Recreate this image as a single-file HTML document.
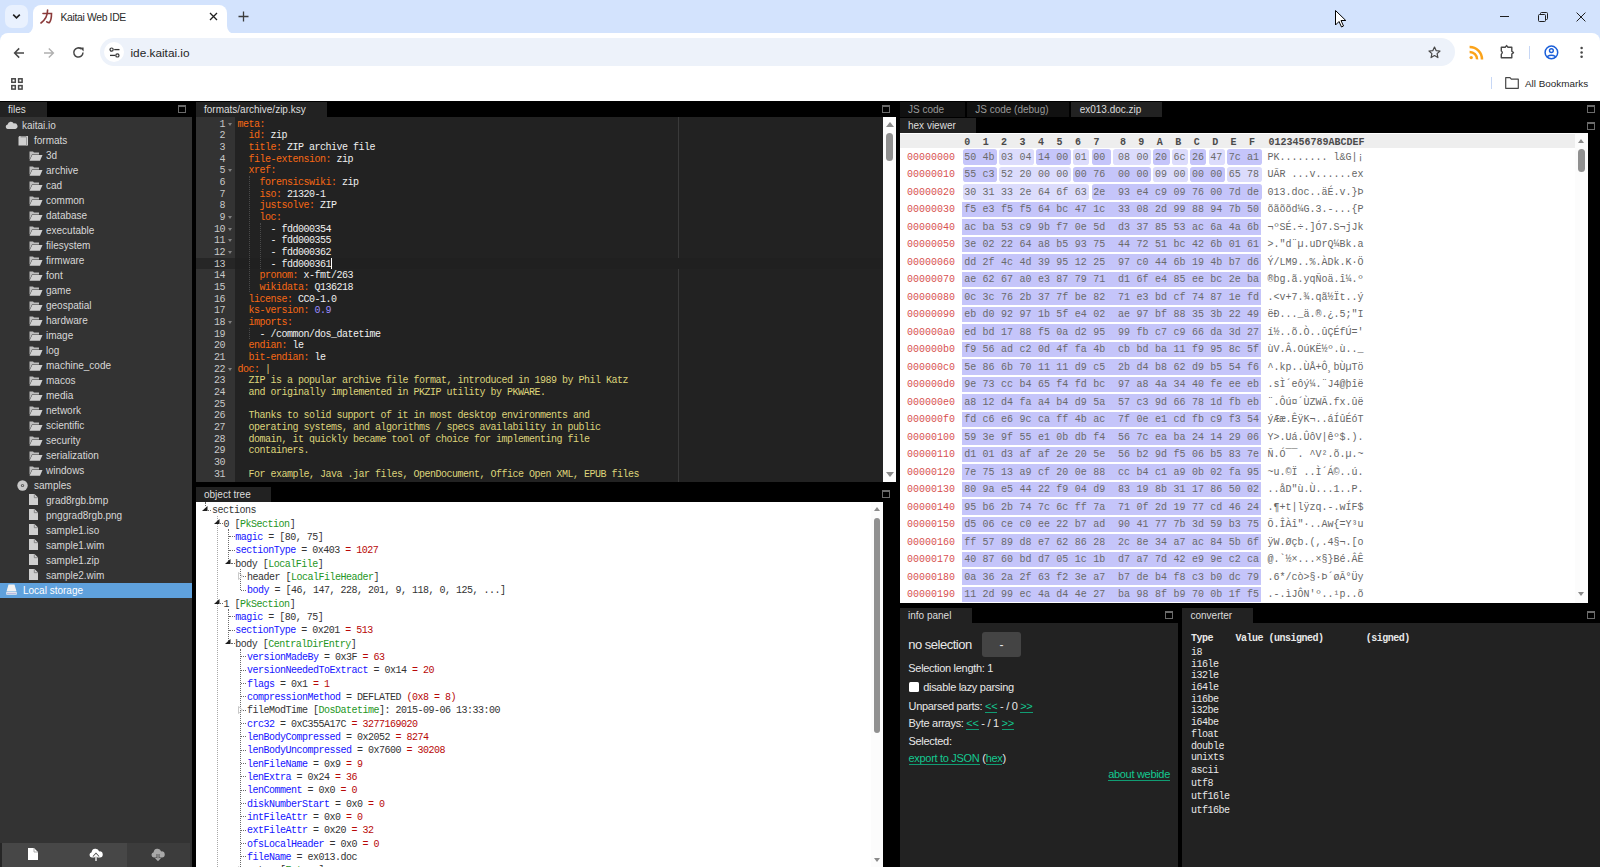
<!DOCTYPE html>
<html><head><meta charset="utf-8"><title>Kaitai Web IDE</title><style>
*{box-sizing:border-box}
html,body{margin:0;padding:0}
body{width:1600px;height:867px;overflow:hidden;position:relative;background:#000;font-family:"Liberation Sans",sans-serif}
.a{position:absolute}
.mono{font-family:"Liberation Mono",monospace}
.tab{position:absolute;height:15px;font-size:10px;line-height:14px;padding-top:0.8px;color:#999;background:#111;padding-left:8px;white-space:nowrap}
.tab.act{background:#222;color:#ddd}
.maxi{position:absolute;width:8px;height:8px;border:1px solid #6a6a6a;border-top-width:2px}
</style></head><body>
<div class="a" style="left:0;top:0;width:1600px;height:45px;background:#d3e3fd"></div>
<div class="a" style="left:0;top:33px;width:1600px;height:68px;background:#fff;border-radius:8px 8px 0 0"></div>
<div class="a" style="left:5px;top:5px;width:23px;height:23px;border-radius:7px;background:#e9f1fe"></div>
<svg class="a" style="left:12px;top:13px" width="9" height="7" viewBox="0 0 9 7"><path d="M1.2 1.6 L4.5 4.8 L7.8 1.6" fill="none" stroke="#1f1f1f" stroke-width="1.6"/></svg>
<div class="a" style="left:33px;top:5px;width:194px;height:30px;background:#fff;border-radius:8px 8px 0 0"></div>
<svg class="a" style="left:25px;top:26px" width="8" height="8" viewBox="0 0 8 8"><path d="M0 8 A8 8 0 0 0 8 0 L8 8Z" fill="#fff"/></svg>
<svg class="a" style="left:227px;top:26px" width="8" height="8" viewBox="0 0 8 8"><path d="M0 0 A8 8 0 0 0 8 8 L0 8Z" fill="#fff"/></svg>
<svg class="a" style="left:40px;top:9px" width="14" height="15" viewBox="0 0 14 15"><path d="M3 4.5 H11.5 Q11.5 11 9.5 13.5 Q8.5 14 6.8 12.8 M7.6 1 Q7.6 9 1 14" fill="none" stroke="#8b3a3a" stroke-width="1.6" stroke-linecap="round"/></svg>
<div class="a" style="left:60.5px;top:11.5px;font-size:10.4px;line-height:12px;color:#2a2a2a;letter-spacing:-0.35px;white-space:nowrap">Kaitai Web IDE</div>
<svg class="a" style="left:209px;top:12px" width="9" height="9" viewBox="0 0 9 9"><path d="M1 1L8 8M8 1L1 8" stroke="#1f1f1f" stroke-width="1.3"/></svg>
<svg class="a" style="left:238px;top:11px" width="11" height="11" viewBox="0 0 11 11"><path d="M5.5 0.5V10.5M0.5 5.5H10.5" stroke="#3c3c3c" stroke-width="1.3"/></svg>
<svg class="a" style="left:1500px;top:16px" width="9" height="2"><path d="M0 0.5H9" stroke="#1f1f1f" stroke-width="1"/></svg>
<svg class="a" style="left:1538px;top:12px" width="10" height="10" viewBox="0 0 10 10"><rect x="0.5" y="2.5" width="7" height="7" rx="1" fill="none" stroke="#1f1f1f"/><path d="M2.5 2.5V1.5Q2.5 0.5 3.5 0.5H8.5Q9.5 0.5 9.5 1.5V6.5Q9.5 7.5 8.5 7.5H7.5" fill="none" stroke="#1f1f1f"/></svg>
<svg class="a" style="left:1576px;top:12px" width="10" height="10" viewBox="0 0 10 10"><path d="M0.6 0.6L9.4 9.4M9.4 0.6L0.6 9.4" stroke="#1f1f1f" stroke-width="1"/></svg>
<svg class="a" style="left:1335px;top:10px" width="12" height="18" viewBox="0 0 12 18"><path d="M0.5 0.5 L0.5 15 L4 11.5 L6.5 17 L8.5 16 L6 10.5 L10.8 10.5 Z" fill="#fff" stroke="#000" stroke-width="1"/></svg>
<svg class="a" style="left:12.5px;top:46.5px" width="12" height="12" viewBox="0 0 12 12"><path d="M11 6H1.8M6.2 1.4L1.6 6L6.2 10.6" fill="none" stroke="#474747" stroke-width="1.5"/></svg>
<svg class="a" style="left:42.5px;top:46.5px" width="12" height="12" viewBox="0 0 12 12"><path d="M1 6H10.2M5.8 1.4L10.4 6L5.8 10.6" fill="none" stroke="#b0b0b0" stroke-width="1.4"/></svg>
<svg class="a" style="left:72px;top:46px" width="13" height="13" viewBox="0 0 13 13"><path d="M11 6.6 A4.6 4.6 0 1 1 9.4 3" fill="none" stroke="#474747" stroke-width="1.5"/><path d="M7.6 1.6 H11.6 V5.6 Z" fill="#474747"/></svg>
<div class="a" style="left:100px;top:38px;width:1355px;height:28px;border-radius:14px;background:#edf2fa"></div>
<div class="a" style="left:104px;top:42px;width:20px;height:20px;border-radius:10px;background:#fff"></div>
<svg class="a" style="left:108.5px;top:47px" width="12" height="12" viewBox="0 0 12 12"><circle cx="2.6" cy="2.6" r="1.6" fill="none" stroke="#333" stroke-width="1.2"/><path d="M5.2 2.6H10.5" stroke="#333" stroke-width="1.3"/><circle cx="8.4" cy="8.4" r="1.6" fill="none" stroke="#333" stroke-width="1.2"/><path d="M1 8.4H6.2" stroke="#333" stroke-width="1.3"/></svg>
<div class="a" style="left:130.5px;top:45.8px;font-size:11.8px;line-height:14px;color:#1f1f1f;white-space:nowrap">ide.kaitai.io</div>
<svg class="a" style="left:1428px;top:46px" width="13" height="13" viewBox="0 0 13 13"><path d="M6.5 1 L8.1 4.6 L12 5 L9.1 7.6 L9.9 11.6 L6.5 9.6 L3.1 11.6 L3.9 7.6 L1 5 L4.9 4.6 Z" fill="none" stroke="#474747" stroke-width="1.2" stroke-linejoin="round"/></svg>
<svg class="a" style="left:1469px;top:45px" width="15" height="15" viewBox="0 0 15 15"><circle cx="2.2" cy="12.6" r="1.7" fill="#fba31a"/><path d="M0.6 6.9 A7.3 7.3 0 0 1 8.1 14.4" fill="none" stroke="#fba31a" stroke-width="2.5"/><path d="M0.6 2 A12.3 12.3 0 0 1 13 14.4" fill="none" stroke="#fba31a" stroke-width="2.5"/></svg>
<svg class="a" style="left:1500px;top:44px" width="16" height="16" viewBox="0 0 16 16"><path d="M1.3 3.3 H5.2 L6.6 1.6 L8 3.3 H11.8 V7.2 L13.5 8.6 L11.8 10 V13.8 H1.3 V10.2 Q3.3 8.6 1.3 7 Z" fill="none" stroke="#474747" stroke-width="1.4" stroke-linejoin="round"/></svg>
<div class="a" style="left:1529px;top:46px;width:1px;height:13px;background:#c7d7f5"></div>
<svg class="a" style="left:1544px;top:45px" width="15" height="15" viewBox="0 0 15 15"><circle cx="7.4" cy="7.4" r="6.3" fill="none" stroke="#1b5fd9" stroke-width="1.5"/><circle cx="7.4" cy="5.6" r="1.9" fill="none" stroke="#1b5fd9" stroke-width="1.4"/><path d="M3.2 11.6 Q7.4 8.9 11.6 11.6" fill="none" stroke="#1b5fd9" stroke-width="1.5"/></svg>
<svg class="a" style="left:1580px;top:46px" width="4" height="13" viewBox="0 0 4 13"><circle cx="1.6" cy="2" r="1.25" fill="#474747"/><circle cx="1.6" cy="6.4" r="1.25" fill="#474747"/><circle cx="1.6" cy="10.8" r="1.25" fill="#474747"/></svg>
<svg class="a" style="left:11px;top:77.5px" width="12" height="12" viewBox="0 0 12 12"><rect x="0.8" y="0.8" width="3.5" height="3.5" fill="none" stroke="#474747" stroke-width="1.5"/><rect x="7.6" y="0.8" width="3.5" height="3.5" fill="none" stroke="#474747" stroke-width="1.5"/><rect x="0.8" y="7.6" width="3.5" height="3.5" fill="none" stroke="#474747" stroke-width="1.5"/><rect x="7.6" y="7.6" width="3.5" height="3.5" fill="none" stroke="#474747" stroke-width="1.5"/></svg>
<div class="a" style="left:1491px;top:77px;width:1px;height:12px;background:#c7d7f5"></div>
<svg class="a" style="left:1505px;top:77px" width="14" height="12" viewBox="0 0 14 12"><path d="M0.7 0.7 H5 L6.3 2.2 H13.3 V11.3 H0.7 Z" fill="none" stroke="#474747" stroke-width="1.2" stroke-linejoin="round"/></svg>
<div class="a" style="left:1525px;top:78px;font-size:9.9px;line-height:12px;color:#1f1f1f;white-space:nowrap">All Bookmarks</div>
<div class="tab act" style="left:0;top:102px;width:47px;padding-left:8px">files</div>
<div class="maxi" style="left:178px;top:105px"></div>
<div class="a" style="left:0;top:117px;width:192px;height:750px;background:#333"></div>
<svg class="a" style="left:5px;top:121px" width="13" height="8" viewBox="0 0 13 8"><path d="M2.5 8 A2.3 2.3 0 0 1 2.6 3.5 A3.3 3.3 0 0 1 8.8 2.5 A2.8 2.8 0 0 1 10.5 8 Z" fill="#cfcfcf"/></svg>
<div class="a" style="left:22px;top:118px;font-size:10px;line-height:15px;color:#d8d8d8;white-space:nowrap">kaitai.io</div>
<svg class="a" style="left:18px;top:135px" width="11" height="11" viewBox="0 0 11 11"><path d="M1.5 1 H10 V10.5 H0.5 V2 Z" fill="#cfcfcf"/><path d="M8.5 1.5 V10.5" stroke="#9a9a9a" stroke-width="1"/><path d="M2.5 1.8 H8" stroke="#666" stroke-width="0.9"/></svg>
<div class="a" style="left:34px;top:133px;font-size:10px;line-height:15px;color:#d8d8d8;white-space:nowrap">formats</div>
<svg class="a" style="left:29px;top:151px" width="14" height="10" viewBox="0 0 14 10"><path d="M0.5 0.5 H4 L5 1.5 H10 V3.5 H3 L0.5 9 Z" fill="#bdbdbd"/><path d="M3.2 4 H13.5 L11 9.8 H0.5 Z" fill="#d0d0d0"/></svg>
<div class="a" style="left:46px;top:148px;font-size:10px;line-height:15px;color:#d8d8d8;white-space:nowrap">3d</div>
<svg class="a" style="left:29px;top:166px" width="14" height="10" viewBox="0 0 14 10"><path d="M0.5 0.5 H4 L5 1.5 H10 V3.5 H3 L0.5 9 Z" fill="#bdbdbd"/><path d="M3.2 4 H13.5 L11 9.8 H0.5 Z" fill="#d0d0d0"/></svg>
<div class="a" style="left:46px;top:163px;font-size:10px;line-height:15px;color:#d8d8d8;white-space:nowrap">archive</div>
<svg class="a" style="left:29px;top:181px" width="14" height="10" viewBox="0 0 14 10"><path d="M0.5 0.5 H4 L5 1.5 H10 V3.5 H3 L0.5 9 Z" fill="#bdbdbd"/><path d="M3.2 4 H13.5 L11 9.8 H0.5 Z" fill="#d0d0d0"/></svg>
<div class="a" style="left:46px;top:178px;font-size:10px;line-height:15px;color:#d8d8d8;white-space:nowrap">cad</div>
<svg class="a" style="left:29px;top:196px" width="14" height="10" viewBox="0 0 14 10"><path d="M0.5 0.5 H4 L5 1.5 H10 V3.5 H3 L0.5 9 Z" fill="#bdbdbd"/><path d="M3.2 4 H13.5 L11 9.8 H0.5 Z" fill="#d0d0d0"/></svg>
<div class="a" style="left:46px;top:193px;font-size:10px;line-height:15px;color:#d8d8d8;white-space:nowrap">common</div>
<svg class="a" style="left:29px;top:211px" width="14" height="10" viewBox="0 0 14 10"><path d="M0.5 0.5 H4 L5 1.5 H10 V3.5 H3 L0.5 9 Z" fill="#bdbdbd"/><path d="M3.2 4 H13.5 L11 9.8 H0.5 Z" fill="#d0d0d0"/></svg>
<div class="a" style="left:46px;top:208px;font-size:10px;line-height:15px;color:#d8d8d8;white-space:nowrap">database</div>
<svg class="a" style="left:29px;top:226px" width="14" height="10" viewBox="0 0 14 10"><path d="M0.5 0.5 H4 L5 1.5 H10 V3.5 H3 L0.5 9 Z" fill="#bdbdbd"/><path d="M3.2 4 H13.5 L11 9.8 H0.5 Z" fill="#d0d0d0"/></svg>
<div class="a" style="left:46px;top:223px;font-size:10px;line-height:15px;color:#d8d8d8;white-space:nowrap">executable</div>
<svg class="a" style="left:29px;top:241px" width="14" height="10" viewBox="0 0 14 10"><path d="M0.5 0.5 H4 L5 1.5 H10 V3.5 H3 L0.5 9 Z" fill="#bdbdbd"/><path d="M3.2 4 H13.5 L11 9.8 H0.5 Z" fill="#d0d0d0"/></svg>
<div class="a" style="left:46px;top:238px;font-size:10px;line-height:15px;color:#d8d8d8;white-space:nowrap">filesystem</div>
<svg class="a" style="left:29px;top:256px" width="14" height="10" viewBox="0 0 14 10"><path d="M0.5 0.5 H4 L5 1.5 H10 V3.5 H3 L0.5 9 Z" fill="#bdbdbd"/><path d="M3.2 4 H13.5 L11 9.8 H0.5 Z" fill="#d0d0d0"/></svg>
<div class="a" style="left:46px;top:253px;font-size:10px;line-height:15px;color:#d8d8d8;white-space:nowrap">firmware</div>
<svg class="a" style="left:29px;top:271px" width="14" height="10" viewBox="0 0 14 10"><path d="M0.5 0.5 H4 L5 1.5 H10 V3.5 H3 L0.5 9 Z" fill="#bdbdbd"/><path d="M3.2 4 H13.5 L11 9.8 H0.5 Z" fill="#d0d0d0"/></svg>
<div class="a" style="left:46px;top:268px;font-size:10px;line-height:15px;color:#d8d8d8;white-space:nowrap">font</div>
<svg class="a" style="left:29px;top:286px" width="14" height="10" viewBox="0 0 14 10"><path d="M0.5 0.5 H4 L5 1.5 H10 V3.5 H3 L0.5 9 Z" fill="#bdbdbd"/><path d="M3.2 4 H13.5 L11 9.8 H0.5 Z" fill="#d0d0d0"/></svg>
<div class="a" style="left:46px;top:283px;font-size:10px;line-height:15px;color:#d8d8d8;white-space:nowrap">game</div>
<svg class="a" style="left:29px;top:301px" width="14" height="10" viewBox="0 0 14 10"><path d="M0.5 0.5 H4 L5 1.5 H10 V3.5 H3 L0.5 9 Z" fill="#bdbdbd"/><path d="M3.2 4 H13.5 L11 9.8 H0.5 Z" fill="#d0d0d0"/></svg>
<div class="a" style="left:46px;top:298px;font-size:10px;line-height:15px;color:#d8d8d8;white-space:nowrap">geospatial</div>
<svg class="a" style="left:29px;top:316px" width="14" height="10" viewBox="0 0 14 10"><path d="M0.5 0.5 H4 L5 1.5 H10 V3.5 H3 L0.5 9 Z" fill="#bdbdbd"/><path d="M3.2 4 H13.5 L11 9.8 H0.5 Z" fill="#d0d0d0"/></svg>
<div class="a" style="left:46px;top:313px;font-size:10px;line-height:15px;color:#d8d8d8;white-space:nowrap">hardware</div>
<svg class="a" style="left:29px;top:331px" width="14" height="10" viewBox="0 0 14 10"><path d="M0.5 0.5 H4 L5 1.5 H10 V3.5 H3 L0.5 9 Z" fill="#bdbdbd"/><path d="M3.2 4 H13.5 L11 9.8 H0.5 Z" fill="#d0d0d0"/></svg>
<div class="a" style="left:46px;top:328px;font-size:10px;line-height:15px;color:#d8d8d8;white-space:nowrap">image</div>
<svg class="a" style="left:29px;top:346px" width="14" height="10" viewBox="0 0 14 10"><path d="M0.5 0.5 H4 L5 1.5 H10 V3.5 H3 L0.5 9 Z" fill="#bdbdbd"/><path d="M3.2 4 H13.5 L11 9.8 H0.5 Z" fill="#d0d0d0"/></svg>
<div class="a" style="left:46px;top:343px;font-size:10px;line-height:15px;color:#d8d8d8;white-space:nowrap">log</div>
<svg class="a" style="left:29px;top:361px" width="14" height="10" viewBox="0 0 14 10"><path d="M0.5 0.5 H4 L5 1.5 H10 V3.5 H3 L0.5 9 Z" fill="#bdbdbd"/><path d="M3.2 4 H13.5 L11 9.8 H0.5 Z" fill="#d0d0d0"/></svg>
<div class="a" style="left:46px;top:358px;font-size:10px;line-height:15px;color:#d8d8d8;white-space:nowrap">machine_code</div>
<svg class="a" style="left:29px;top:376px" width="14" height="10" viewBox="0 0 14 10"><path d="M0.5 0.5 H4 L5 1.5 H10 V3.5 H3 L0.5 9 Z" fill="#bdbdbd"/><path d="M3.2 4 H13.5 L11 9.8 H0.5 Z" fill="#d0d0d0"/></svg>
<div class="a" style="left:46px;top:373px;font-size:10px;line-height:15px;color:#d8d8d8;white-space:nowrap">macos</div>
<svg class="a" style="left:29px;top:391px" width="14" height="10" viewBox="0 0 14 10"><path d="M0.5 0.5 H4 L5 1.5 H10 V3.5 H3 L0.5 9 Z" fill="#bdbdbd"/><path d="M3.2 4 H13.5 L11 9.8 H0.5 Z" fill="#d0d0d0"/></svg>
<div class="a" style="left:46px;top:388px;font-size:10px;line-height:15px;color:#d8d8d8;white-space:nowrap">media</div>
<svg class="a" style="left:29px;top:406px" width="14" height="10" viewBox="0 0 14 10"><path d="M0.5 0.5 H4 L5 1.5 H10 V3.5 H3 L0.5 9 Z" fill="#bdbdbd"/><path d="M3.2 4 H13.5 L11 9.8 H0.5 Z" fill="#d0d0d0"/></svg>
<div class="a" style="left:46px;top:403px;font-size:10px;line-height:15px;color:#d8d8d8;white-space:nowrap">network</div>
<svg class="a" style="left:29px;top:421px" width="14" height="10" viewBox="0 0 14 10"><path d="M0.5 0.5 H4 L5 1.5 H10 V3.5 H3 L0.5 9 Z" fill="#bdbdbd"/><path d="M3.2 4 H13.5 L11 9.8 H0.5 Z" fill="#d0d0d0"/></svg>
<div class="a" style="left:46px;top:418px;font-size:10px;line-height:15px;color:#d8d8d8;white-space:nowrap">scientific</div>
<svg class="a" style="left:29px;top:436px" width="14" height="10" viewBox="0 0 14 10"><path d="M0.5 0.5 H4 L5 1.5 H10 V3.5 H3 L0.5 9 Z" fill="#bdbdbd"/><path d="M3.2 4 H13.5 L11 9.8 H0.5 Z" fill="#d0d0d0"/></svg>
<div class="a" style="left:46px;top:433px;font-size:10px;line-height:15px;color:#d8d8d8;white-space:nowrap">security</div>
<svg class="a" style="left:29px;top:451px" width="14" height="10" viewBox="0 0 14 10"><path d="M0.5 0.5 H4 L5 1.5 H10 V3.5 H3 L0.5 9 Z" fill="#bdbdbd"/><path d="M3.2 4 H13.5 L11 9.8 H0.5 Z" fill="#d0d0d0"/></svg>
<div class="a" style="left:46px;top:448px;font-size:10px;line-height:15px;color:#d8d8d8;white-space:nowrap">serialization</div>
<svg class="a" style="left:29px;top:466px" width="14" height="10" viewBox="0 0 14 10"><path d="M0.5 0.5 H4 L5 1.5 H10 V3.5 H3 L0.5 9 Z" fill="#bdbdbd"/><path d="M3.2 4 H13.5 L11 9.8 H0.5 Z" fill="#d0d0d0"/></svg>
<div class="a" style="left:46px;top:463px;font-size:10px;line-height:15px;color:#d8d8d8;white-space:nowrap">windows</div>
<svg class="a" style="left:17px;top:480px" width="11" height="11" viewBox="0 0 11 11"><circle cx="5.5" cy="5.5" r="5.2" fill="#c8c8c8"/><circle cx="5.5" cy="5.5" r="1.6" fill="#555"/><circle cx="5.5" cy="5.5" r="0.7" fill="#c8c8c8"/></svg>
<div class="a" style="left:34px;top:478px;font-size:10px;line-height:15px;color:#d8d8d8;white-space:nowrap">samples</div>
<svg class="a" style="left:29px;top:494px" width="9" height="11" viewBox="0 0 9 11"><path d="M0 0 H5.5 L9 3.5 V11 H0 Z" fill="#d0d0d0"/><path d="M5.3 0.3 V3.7 H8.7" fill="none" stroke="#777" stroke-width="0.8"/></svg>
<div class="a" style="left:46px;top:493px;font-size:10px;line-height:15px;color:#d8d8d8;white-space:nowrap">grad8rgb.bmp</div>
<svg class="a" style="left:29px;top:509px" width="9" height="11" viewBox="0 0 9 11"><path d="M0 0 H5.5 L9 3.5 V11 H0 Z" fill="#d0d0d0"/><path d="M5.3 0.3 V3.7 H8.7" fill="none" stroke="#777" stroke-width="0.8"/></svg>
<div class="a" style="left:46px;top:508px;font-size:10px;line-height:15px;color:#d8d8d8;white-space:nowrap">pnggrad8rgb.png</div>
<svg class="a" style="left:29px;top:524px" width="9" height="11" viewBox="0 0 9 11"><path d="M0 0 H5.5 L9 3.5 V11 H0 Z" fill="#d0d0d0"/><path d="M5.3 0.3 V3.7 H8.7" fill="none" stroke="#777" stroke-width="0.8"/></svg>
<div class="a" style="left:46px;top:523px;font-size:10px;line-height:15px;color:#d8d8d8;white-space:nowrap">sample1.iso</div>
<svg class="a" style="left:29px;top:539px" width="9" height="11" viewBox="0 0 9 11"><path d="M0 0 H5.5 L9 3.5 V11 H0 Z" fill="#d0d0d0"/><path d="M5.3 0.3 V3.7 H8.7" fill="none" stroke="#777" stroke-width="0.8"/></svg>
<div class="a" style="left:46px;top:538px;font-size:10px;line-height:15px;color:#d8d8d8;white-space:nowrap">sample1.wim</div>
<svg class="a" style="left:29px;top:554px" width="9" height="11" viewBox="0 0 9 11"><path d="M0 0 H5.5 L9 3.5 V11 H0 Z" fill="#d0d0d0"/><path d="M5.3 0.3 V3.7 H8.7" fill="none" stroke="#777" stroke-width="0.8"/></svg>
<div class="a" style="left:46px;top:553px;font-size:10px;line-height:15px;color:#d8d8d8;white-space:nowrap">sample1.zip</div>
<svg class="a" style="left:29px;top:569px" width="9" height="11" viewBox="0 0 9 11"><path d="M0 0 H5.5 L9 3.5 V11 H0 Z" fill="#d0d0d0"/><path d="M5.3 0.3 V3.7 H8.7" fill="none" stroke="#777" stroke-width="0.8"/></svg>
<div class="a" style="left:46px;top:568px;font-size:10px;line-height:15px;color:#d8d8d8;white-space:nowrap">sample2.wim</div>
<div class="a" style="left:0;top:583px;width:192px;height:15px;background:#5fa1dd"></div>
<svg class="a" style="left:6px;top:584px" width="11" height="11" viewBox="0 0 11 11"><path d="M2.5 0.5 H8.5 L10.5 7.5 H0.5 Z" fill="#f2f2f2"/><rect x="0.3" y="8" width="10.4" height="2.7" fill="#f2f2f2"/><path d="M1 9.3 H10" stroke="#9b9bd8" stroke-width="0.8"/></svg>
<div class="a" style="left:23px;top:583px;font-size:10px;line-height:15px;color:#fff;white-space:nowrap">Local storage</div>
<div class="a" style="left:0;top:843px;width:2px;height:24px;background:#262626"></div>
<div class="a" style="left:2px;top:843px;width:125px;height:24px;background:#474747"></div>
<div class="a" style="left:127px;top:843px;width:63px;height:24px;background:#3c3c3c"></div>
<svg class="a" style="left:28px;top:848px" width="10" height="12" viewBox="0 0 10 12"><path d="M0 0 H6 L10 4 V12 H0 Z" fill="#fff"/><path d="M6 0 V4 H10" fill="none" stroke="#999" stroke-width="0.8"/></svg>
<svg class="a" style="left:89px;top:848px" width="14" height="14" viewBox="0 0 14 14"><path d="M2.8 9.6 A2.7 2.7 0 0 1 2.6 4.3 A3.9 3.9 0 0 1 10.2 3.4 A3.1 3.1 0 0 1 11 9.6 Z" fill="#fff"/><path d="M7 13 V6.8 M4.6 9.2 L7 6.6 L9.4 9.2" fill="none" stroke="#474747" stroke-width="2.8"/><path d="M7 13 V6.8 M4.6 9.2 L7 6.6 L9.4 9.2" fill="none" stroke="#fff" stroke-width="1.3"/></svg>
<svg class="a" style="left:151px;top:848px" width="14" height="14" viewBox="0 0 14 14"><path d="M2.8 9.6 A2.7 2.7 0 0 1 2.6 4.3 A3.9 3.9 0 0 1 10.2 3.4 A3.1 3.1 0 0 1 11 9.6 Z" fill="#a9a9a9"/><path d="M7 6 V12 M4.6 9.8 L7 12.3 L9.4 9.8" fill="none" stroke="#3c3c3c" stroke-width="2.8"/><path d="M7 6 V12 M4.6 9.8 L7 12.3 L9.4 9.8" fill="none" stroke="#a9a9a9" stroke-width="1.3"/></svg>
<div class="tab act" style="left:196px;top:102px;width:130.5px;padding-left:8px">formats/archive/zip.ksy</div>
<div class="maxi" style="left:882px;top:105px"></div>
<div class="a" style="left:196px;top:117px;width:700px;height:365px;background:#222;overflow:hidden">
<div class="a" style="left:0;top:0;width:39px;height:365px;background:#333"></div>
<div class="a" style="left:0;top:140.50px;width:39px;height:11.67px;background:#262626"></div>
<div class="a" style="left:482px;top:0;width:1px;height:365px;background:#3a3a3a"></div>
<div class="a" style="left:39px;top:141.00px;width:648px;height:11.17px;background:#202020"></div>
<div class="a mono" style="left:0;top:1.50px;width:29px;text-align:right;font-size:10px;line-height:11.67px;color:#c8c8c8;letter-spacing:-0.5px">1</div>
<div class="a" style="left:31.5px;top:5.70px;width:0;height:0;border-left:2.5px solid transparent;border-right:2.5px solid transparent;border-top:3px solid #808080"></div>
<div class="a mono" style="left:41.5px;top:1.50px;font-size:10px;line-height:11.67px;white-space:pre;letter-spacing:-0.5px;color:#f0f0f0"><span style="color:#f66814">meta:</span></div>
<div class="a mono" style="left:0;top:13.17px;width:29px;text-align:right;font-size:10px;line-height:11.67px;color:#c8c8c8;letter-spacing:-0.5px">2</div>
<div class="a mono" style="left:41.5px;top:13.17px;font-size:10px;line-height:11.67px;white-space:pre;letter-spacing:-0.5px;color:#f0f0f0">  <span style="color:#f66814">id:</span> <span style="color:#f0f0f0">zip</span></div>
<div class="a mono" style="left:0;top:24.83px;width:29px;text-align:right;font-size:10px;line-height:11.67px;color:#c8c8c8;letter-spacing:-0.5px">3</div>
<div class="a mono" style="left:41.5px;top:24.83px;font-size:10px;line-height:11.67px;white-space:pre;letter-spacing:-0.5px;color:#f0f0f0">  <span style="color:#f66814">title:</span> <span style="color:#f0f0f0">ZIP archive file</span></div>
<div class="a mono" style="left:0;top:36.50px;width:29px;text-align:right;font-size:10px;line-height:11.67px;color:#c8c8c8;letter-spacing:-0.5px">4</div>
<div class="a mono" style="left:41.5px;top:36.50px;font-size:10px;line-height:11.67px;white-space:pre;letter-spacing:-0.5px;color:#f0f0f0">  <span style="color:#f66814">file-extension:</span> <span style="color:#f0f0f0">zip</span></div>
<div class="a mono" style="left:0;top:48.17px;width:29px;text-align:right;font-size:10px;line-height:11.67px;color:#c8c8c8;letter-spacing:-0.5px">5</div>
<div class="a" style="left:31.5px;top:52.37px;width:0;height:0;border-left:2.5px solid transparent;border-right:2.5px solid transparent;border-top:3px solid #808080"></div>
<div class="a mono" style="left:41.5px;top:48.17px;font-size:10px;line-height:11.67px;white-space:pre;letter-spacing:-0.5px;color:#f0f0f0">  <span style="color:#f66814">xref:</span></div>
<div class="a mono" style="left:0;top:59.83px;width:29px;text-align:right;font-size:10px;line-height:11.67px;color:#c8c8c8;letter-spacing:-0.5px">6</div>
<div class="a mono" style="left:41.5px;top:59.83px;font-size:10px;line-height:11.67px;white-space:pre;letter-spacing:-0.5px;color:#f0f0f0">    <span style="color:#f66814">forensicswiki:</span> <span style="color:#f0f0f0">zip</span></div>
<div class="a mono" style="left:0;top:71.50px;width:29px;text-align:right;font-size:10px;line-height:11.67px;color:#c8c8c8;letter-spacing:-0.5px">7</div>
<div class="a mono" style="left:41.5px;top:71.50px;font-size:10px;line-height:11.67px;white-space:pre;letter-spacing:-0.5px;color:#f0f0f0">    <span style="color:#f66814">iso:</span> <span style="color:#f0f0f0">21320-1</span></div>
<div class="a mono" style="left:0;top:83.17px;width:29px;text-align:right;font-size:10px;line-height:11.67px;color:#c8c8c8;letter-spacing:-0.5px">8</div>
<div class="a mono" style="left:41.5px;top:83.17px;font-size:10px;line-height:11.67px;white-space:pre;letter-spacing:-0.5px;color:#f0f0f0">    <span style="color:#f66814">justsolve:</span> <span style="color:#f0f0f0">ZIP</span></div>
<div class="a mono" style="left:0;top:94.83px;width:29px;text-align:right;font-size:10px;line-height:11.67px;color:#c8c8c8;letter-spacing:-0.5px">9</div>
<div class="a" style="left:31.5px;top:99.03px;width:0;height:0;border-left:2.5px solid transparent;border-right:2.5px solid transparent;border-top:3px solid #808080"></div>
<div class="a mono" style="left:41.5px;top:94.83px;font-size:10px;line-height:11.67px;white-space:pre;letter-spacing:-0.5px;color:#f0f0f0">    <span style="color:#f66814">loc:</span></div>
<div class="a mono" style="left:0;top:106.50px;width:29px;text-align:right;font-size:10px;line-height:11.67px;color:#c8c8c8;letter-spacing:-0.5px">10</div>
<div class="a" style="left:31.5px;top:110.70px;width:0;height:0;border-left:2.5px solid transparent;border-right:2.5px solid transparent;border-top:3px solid #808080"></div>
<div class="a mono" style="left:41.5px;top:106.50px;font-size:10px;line-height:11.67px;white-space:pre;letter-spacing:-0.5px;color:#f0f0f0">      <span style="color:#f0f0f0">- fdd000354</span></div>
<div class="a mono" style="left:0;top:118.17px;width:29px;text-align:right;font-size:10px;line-height:11.67px;color:#c8c8c8;letter-spacing:-0.5px">11</div>
<div class="a" style="left:31.5px;top:122.37px;width:0;height:0;border-left:2.5px solid transparent;border-right:2.5px solid transparent;border-top:3px solid #808080"></div>
<div class="a mono" style="left:41.5px;top:118.17px;font-size:10px;line-height:11.67px;white-space:pre;letter-spacing:-0.5px;color:#f0f0f0">      <span style="color:#f0f0f0">- fdd000355</span></div>
<div class="a mono" style="left:0;top:129.83px;width:29px;text-align:right;font-size:10px;line-height:11.67px;color:#c8c8c8;letter-spacing:-0.5px">12</div>
<div class="a" style="left:31.5px;top:134.03px;width:0;height:0;border-left:2.5px solid transparent;border-right:2.5px solid transparent;border-top:3px solid #808080"></div>
<div class="a mono" style="left:41.5px;top:129.83px;font-size:10px;line-height:11.67px;white-space:pre;letter-spacing:-0.5px;color:#f0f0f0">      <span style="color:#f0f0f0">- fdd000362</span></div>
<div class="a mono" style="left:0;top:141.50px;width:29px;text-align:right;font-size:10px;line-height:11.67px;color:#c8c8c8;letter-spacing:-0.5px">13</div>
<div class="a mono" style="left:41.5px;top:141.50px;font-size:10px;line-height:11.67px;white-space:pre;letter-spacing:-0.5px;color:#f0f0f0">      <span style="color:#f0f0f0">- fdd000361</span></div>
<div class="a mono" style="left:0;top:153.17px;width:29px;text-align:right;font-size:10px;line-height:11.67px;color:#c8c8c8;letter-spacing:-0.5px">14</div>
<div class="a mono" style="left:41.5px;top:153.17px;font-size:10px;line-height:11.67px;white-space:pre;letter-spacing:-0.5px;color:#f0f0f0">    <span style="color:#f66814">pronom:</span> <span style="color:#f0f0f0">x-fmt/263</span></div>
<div class="a mono" style="left:0;top:164.83px;width:29px;text-align:right;font-size:10px;line-height:11.67px;color:#c8c8c8;letter-spacing:-0.5px">15</div>
<div class="a mono" style="left:41.5px;top:164.83px;font-size:10px;line-height:11.67px;white-space:pre;letter-spacing:-0.5px;color:#f0f0f0">    <span style="color:#f66814">wikidata:</span> <span style="color:#f0f0f0">Q136218</span></div>
<div class="a mono" style="left:0;top:176.50px;width:29px;text-align:right;font-size:10px;line-height:11.67px;color:#c8c8c8;letter-spacing:-0.5px">16</div>
<div class="a mono" style="left:41.5px;top:176.50px;font-size:10px;line-height:11.67px;white-space:pre;letter-spacing:-0.5px;color:#f0f0f0">  <span style="color:#f66814">license:</span> <span style="color:#f0f0f0">CC0-1.0</span></div>
<div class="a mono" style="left:0;top:188.17px;width:29px;text-align:right;font-size:10px;line-height:11.67px;color:#c8c8c8;letter-spacing:-0.5px">17</div>
<div class="a mono" style="left:41.5px;top:188.17px;font-size:10px;line-height:11.67px;white-space:pre;letter-spacing:-0.5px;color:#f0f0f0">  <span style="color:#f66814">ks-version:</span> <span style="color:#9a8cff">0.9</span></div>
<div class="a mono" style="left:0;top:199.83px;width:29px;text-align:right;font-size:10px;line-height:11.67px;color:#c8c8c8;letter-spacing:-0.5px">18</div>
<div class="a" style="left:31.5px;top:204.03px;width:0;height:0;border-left:2.5px solid transparent;border-right:2.5px solid transparent;border-top:3px solid #808080"></div>
<div class="a mono" style="left:41.5px;top:199.83px;font-size:10px;line-height:11.67px;white-space:pre;letter-spacing:-0.5px;color:#f0f0f0">  <span style="color:#f66814">imports:</span></div>
<div class="a mono" style="left:0;top:211.50px;width:29px;text-align:right;font-size:10px;line-height:11.67px;color:#c8c8c8;letter-spacing:-0.5px">19</div>
<div class="a mono" style="left:41.5px;top:211.50px;font-size:10px;line-height:11.67px;white-space:pre;letter-spacing:-0.5px;color:#f0f0f0">    <span style="color:#f0f0f0">- /common/dos_datetime</span></div>
<div class="a mono" style="left:0;top:223.17px;width:29px;text-align:right;font-size:10px;line-height:11.67px;color:#c8c8c8;letter-spacing:-0.5px">20</div>
<div class="a mono" style="left:41.5px;top:223.17px;font-size:10px;line-height:11.67px;white-space:pre;letter-spacing:-0.5px;color:#f0f0f0">  <span style="color:#f66814">endian:</span> <span style="color:#f0f0f0">le</span></div>
<div class="a mono" style="left:0;top:234.83px;width:29px;text-align:right;font-size:10px;line-height:11.67px;color:#c8c8c8;letter-spacing:-0.5px">21</div>
<div class="a mono" style="left:41.5px;top:234.83px;font-size:10px;line-height:11.67px;white-space:pre;letter-spacing:-0.5px;color:#f0f0f0">  <span style="color:#f66814">bit-endian:</span> <span style="color:#f0f0f0">le</span></div>
<div class="a mono" style="left:0;top:246.50px;width:29px;text-align:right;font-size:10px;line-height:11.67px;color:#c8c8c8;letter-spacing:-0.5px">22</div>
<div class="a" style="left:31.5px;top:250.70px;width:0;height:0;border-left:2.5px solid transparent;border-right:2.5px solid transparent;border-top:3px solid #808080"></div>
<div class="a mono" style="left:41.5px;top:246.50px;font-size:10px;line-height:11.67px;white-space:pre;letter-spacing:-0.5px;color:#f0f0f0"><span style="color:#f66814">doc:</span> <span style="color:#ddd47a">|</span></div>
<div class="a mono" style="left:0;top:258.17px;width:29px;text-align:right;font-size:10px;line-height:11.67px;color:#c8c8c8;letter-spacing:-0.5px">23</div>
<div class="a mono" style="left:41.5px;top:258.17px;font-size:10px;line-height:11.67px;white-space:pre;letter-spacing:-0.5px;color:#f0f0f0">  <span style="color:#ddd47a">ZIP is a popular archive file format, introduced in 1989 by Phil Katz</span></div>
<div class="a mono" style="left:0;top:269.83px;width:29px;text-align:right;font-size:10px;line-height:11.67px;color:#c8c8c8;letter-spacing:-0.5px">24</div>
<div class="a mono" style="left:41.5px;top:269.83px;font-size:10px;line-height:11.67px;white-space:pre;letter-spacing:-0.5px;color:#f0f0f0">  <span style="color:#ddd47a">and originally implemented in PKZIP utility by PKWARE.</span></div>
<div class="a mono" style="left:0;top:281.50px;width:29px;text-align:right;font-size:10px;line-height:11.67px;color:#c8c8c8;letter-spacing:-0.5px">25</div>
<div class="a mono" style="left:41.5px;top:281.50px;font-size:10px;line-height:11.67px;white-space:pre;letter-spacing:-0.5px;color:#f0f0f0"></div>
<div class="a mono" style="left:0;top:293.17px;width:29px;text-align:right;font-size:10px;line-height:11.67px;color:#c8c8c8;letter-spacing:-0.5px">26</div>
<div class="a mono" style="left:41.5px;top:293.17px;font-size:10px;line-height:11.67px;white-space:pre;letter-spacing:-0.5px;color:#f0f0f0">  <span style="color:#ddd47a">Thanks to solid support of it in most desktop environments and</span></div>
<div class="a mono" style="left:0;top:304.83px;width:29px;text-align:right;font-size:10px;line-height:11.67px;color:#c8c8c8;letter-spacing:-0.5px">27</div>
<div class="a mono" style="left:41.5px;top:304.83px;font-size:10px;line-height:11.67px;white-space:pre;letter-spacing:-0.5px;color:#f0f0f0">  <span style="color:#ddd47a">operating systems, and algorithms / specs availability in public</span></div>
<div class="a mono" style="left:0;top:316.50px;width:29px;text-align:right;font-size:10px;line-height:11.67px;color:#c8c8c8;letter-spacing:-0.5px">28</div>
<div class="a mono" style="left:41.5px;top:316.50px;font-size:10px;line-height:11.67px;white-space:pre;letter-spacing:-0.5px;color:#f0f0f0">  <span style="color:#ddd47a">domain, it quickly became tool of choice for implementing file</span></div>
<div class="a mono" style="left:0;top:328.17px;width:29px;text-align:right;font-size:10px;line-height:11.67px;color:#c8c8c8;letter-spacing:-0.5px">29</div>
<div class="a mono" style="left:41.5px;top:328.17px;font-size:10px;line-height:11.67px;white-space:pre;letter-spacing:-0.5px;color:#f0f0f0">  <span style="color:#ddd47a">containers.</span></div>
<div class="a mono" style="left:0;top:339.83px;width:29px;text-align:right;font-size:10px;line-height:11.67px;color:#c8c8c8;letter-spacing:-0.5px">30</div>
<div class="a mono" style="left:41.5px;top:339.83px;font-size:10px;line-height:11.67px;white-space:pre;letter-spacing:-0.5px;color:#f0f0f0"></div>
<div class="a mono" style="left:0;top:351.50px;width:29px;text-align:right;font-size:10px;line-height:11.67px;color:#c8c8c8;letter-spacing:-0.5px">31</div>
<div class="a mono" style="left:41.5px;top:351.50px;font-size:10px;line-height:11.67px;white-space:pre;letter-spacing:-0.5px;color:#f0f0f0">  <span style="color:#ddd47a">For example, Java .jar files, OpenDocument, Office Open XML, EPUB files</span></div>
<div class="a" style="left:52.5px;top:58.83px;width:1px;height:116.67px;border-left:1px dotted #4a4a4a"></div>
<div class="a" style="left:63.5px;top:105.50px;width:1px;height:46.67px;border-left:1px dotted #4a4a4a"></div>
<div class="a" style="left:52.5px;top:210.50px;width:1px;height:11.67px;border-left:1px dotted #4a4a4a"></div>
<div class="a" style="left:135.0px;top:140.50px;width:1px;height:11.67px;background:#fff"></div>
<div class="a" style="left:687px;top:0;width:13px;height:365px;background:#fcfcfc"></div>
<div class="a" style="left:689.5px;top:5px;width:0;height:0;border-left:4px solid transparent;border-right:4px solid transparent;border-bottom:5px solid #8a8a8a"></div>
<div class="a" style="left:690px;top:15.5px;width:7px;height:28.5px;border-radius:3.5px;background:#909090"></div>
<div class="a" style="left:689.5px;top:354.5px;width:0;height:0;border-left:4px solid transparent;border-right:4px solid transparent;border-top:5px solid #8a8a8a"></div>
</div>
<div class="tab act" style="left:196px;top:487px;width:75px;padding-left:8px">object tree</div>
<div class="maxi" style="left:882px;top:490px"></div>
<div class="a" style="left:196px;top:502px;width:687px;height:365px;background:#fff;overflow:hidden">
<div class="a" style="left:9.0px;top:0.0px;width:1px;height:4.0px;border-left:1px dotted #6a6a6a"></div>
<div class="a" style="left:21.0px;top:13.8px;width:1px;height:351.2px;border-left:1px dotted #a8a8a8"></div>
<div class="a" style="left:32.0px;top:27.2px;width:1px;height:33.8px;border-left:1px dotted #6a6a6a"></div>
<div class="a" style="left:44.0px;top:67.2px;width:1px;height:20.5px;border-left:1px dotted #6a6a6a"></div>
<div class="a" style="left:32.0px;top:107.2px;width:1px;height:33.8px;border-left:1px dotted #6a6a6a"></div>
<div class="a" style="left:44.0px;top:147.2px;width:1px;height:217.8px;border-left:1px dotted #6a6a6a"></div>
<svg class="a" style="left:6.0px;top:4.1px" width="5.5" height="5" viewBox="0 0 5.5 5"><path d="M0 5 L5.5 5 L5.5 0 Z" fill="#1e1e1e"/></svg>
<div class="a" style="left:12.0px;top:7.7px;width:3.4px;height:1px;border-top:1px dotted #6a6a6a"></div>
<div class="a mono" style="left:15.9px;top:2.2px;font-size:10px;line-height:13.333px;white-space:pre;letter-spacing:-0.5px;color:#333">sections</div>
<svg class="a" style="left:18.0px;top:17.4px" width="5.5" height="5" viewBox="0 0 5.5 5"><path d="M0 5 L5.5 5 L5.5 0 Z" fill="#1e1e1e"/></svg>
<div class="a" style="left:24.0px;top:21.0px;width:3.1px;height:1px;border-top:1px dotted #6a6a6a"></div>
<div class="a mono" style="left:27.6px;top:15.5px;font-size:10px;line-height:13.333px;white-space:pre;letter-spacing:-0.5px;color:#333">0 [<span style="color:#1e961e">PkSection</span>]</div>
<div class="a" style="left:33.0px;top:34.3px;width:5.7px;height:1px;border-top:1px dotted #6a6a6a"></div>
<div class="a mono" style="left:39.2px;top:28.9px;font-size:10px;line-height:13.333px;white-space:pre;letter-spacing:-0.5px;color:#333"><span style="color:#1414ff">magic</span> = [80, 75]</div>
<div class="a" style="left:33.0px;top:47.7px;width:5.7px;height:1px;border-top:1px dotted #6a6a6a"></div>
<div class="a mono" style="left:39.2px;top:42.2px;font-size:10px;line-height:13.333px;white-space:pre;letter-spacing:-0.5px;color:#333"><span style="color:#1414ff">sectionType</span> = 0x403 <span style="color:#b80808">= 1027</span></div>
<svg class="a" style="left:29.0px;top:57.4px" width="5.5" height="5" viewBox="0 0 5.5 5"><path d="M0 5 L5.5 5 L5.5 0 Z" fill="#1e1e1e"/></svg>
<div class="a" style="left:35.0px;top:61.0px;width:3.7px;height:1px;border-top:1px dotted #6a6a6a"></div>
<div class="a mono" style="left:39.2px;top:55.5px;font-size:10px;line-height:13.333px;white-space:pre;letter-spacing:-0.5px;color:#333">body [<span style="color:#1e961e">LocalFile</span>]</div>
<svg class="a" style="left:42.0px;top:70.3px" width="5" height="8" viewBox="0 0 5 8"><path d="M0.5 0.5 L4.5 4 L0.5 7.5 Z" fill="none" stroke="#c9c9c9" stroke-width="1"/></svg>
<div class="a" style="left:47.0px;top:74.3px;width:3.4px;height:1px;border-top:1px dotted #6a6a6a"></div>
<div class="a mono" style="left:50.9px;top:68.9px;font-size:10px;line-height:13.333px;white-space:pre;letter-spacing:-0.5px;color:#333">header [<span style="color:#1e961e">LocalFileHeader</span>]</div>
<div class="a" style="left:45.0px;top:87.7px;width:5.4px;height:1px;border-top:1px dotted #6a6a6a"></div>
<div class="a mono" style="left:50.9px;top:82.2px;font-size:10px;line-height:13.333px;white-space:pre;letter-spacing:-0.5px;color:#333"><span style="color:#1414ff">body</span> = [46, 147, 228, 201, 9, 118, 0, 125, ...]</div>
<svg class="a" style="left:18.0px;top:97.4px" width="5.5" height="5" viewBox="0 0 5.5 5"><path d="M0 5 L5.5 5 L5.5 0 Z" fill="#1e1e1e"/></svg>
<div class="a" style="left:24.0px;top:101.0px;width:3.1px;height:1px;border-top:1px dotted #6a6a6a"></div>
<div class="a mono" style="left:27.6px;top:95.5px;font-size:10px;line-height:13.333px;white-space:pre;letter-spacing:-0.5px;color:#333">1 [<span style="color:#1e961e">PkSection</span>]</div>
<div class="a" style="left:33.0px;top:114.3px;width:5.7px;height:1px;border-top:1px dotted #6a6a6a"></div>
<div class="a mono" style="left:39.2px;top:108.9px;font-size:10px;line-height:13.333px;white-space:pre;letter-spacing:-0.5px;color:#333"><span style="color:#1414ff">magic</span> = [80, 75]</div>
<div class="a" style="left:33.0px;top:127.7px;width:5.7px;height:1px;border-top:1px dotted #6a6a6a"></div>
<div class="a mono" style="left:39.2px;top:122.2px;font-size:10px;line-height:13.333px;white-space:pre;letter-spacing:-0.5px;color:#333"><span style="color:#1414ff">sectionType</span> = 0x201 <span style="color:#b80808">= 513</span></div>
<svg class="a" style="left:29.0px;top:137.4px" width="5.5" height="5" viewBox="0 0 5.5 5"><path d="M0 5 L5.5 5 L5.5 0 Z" fill="#1e1e1e"/></svg>
<div class="a" style="left:35.0px;top:141.0px;width:3.7px;height:1px;border-top:1px dotted #6a6a6a"></div>
<div class="a mono" style="left:39.2px;top:135.5px;font-size:10px;line-height:13.333px;white-space:pre;letter-spacing:-0.5px;color:#333">body [<span style="color:#1e961e">CentralDirEntry</span>]</div>
<div class="a" style="left:45.0px;top:154.3px;width:5.4px;height:1px;border-top:1px dotted #6a6a6a"></div>
<div class="a mono" style="left:50.9px;top:148.9px;font-size:10px;line-height:13.333px;white-space:pre;letter-spacing:-0.5px;color:#333"><span style="color:#1414ff">versionMadeBy</span> = 0x3F <span style="color:#b80808">= 63</span></div>
<div class="a" style="left:45.0px;top:167.7px;width:5.4px;height:1px;border-top:1px dotted #6a6a6a"></div>
<div class="a mono" style="left:50.9px;top:162.2px;font-size:10px;line-height:13.333px;white-space:pre;letter-spacing:-0.5px;color:#333"><span style="color:#1414ff">versionNeededToExtract</span> = 0x14 <span style="color:#b80808">= 20</span></div>
<div class="a" style="left:45.0px;top:181.0px;width:5.4px;height:1px;border-top:1px dotted #6a6a6a"></div>
<div class="a mono" style="left:50.9px;top:175.5px;font-size:10px;line-height:13.333px;white-space:pre;letter-spacing:-0.5px;color:#333"><span style="color:#1414ff">flags</span> = 0x1 <span style="color:#b80808">= 1</span></div>
<div class="a" style="left:45.0px;top:194.3px;width:5.4px;height:1px;border-top:1px dotted #6a6a6a"></div>
<div class="a mono" style="left:50.9px;top:188.9px;font-size:10px;line-height:13.333px;white-space:pre;letter-spacing:-0.5px;color:#333"><span style="color:#1414ff">compressionMethod</span> = DEFLATED <span style="color:#b80808">(0x8 = 8)</span></div>
<svg class="a" style="left:42.0px;top:203.7px" width="5" height="8" viewBox="0 0 5 8"><path d="M0.5 0.5 L4.5 4 L0.5 7.5 Z" fill="none" stroke="#c9c9c9" stroke-width="1"/></svg>
<div class="a" style="left:47.0px;top:207.7px;width:3.4px;height:1px;border-top:1px dotted #6a6a6a"></div>
<div class="a mono" style="left:50.9px;top:202.2px;font-size:10px;line-height:13.333px;white-space:pre;letter-spacing:-0.5px;color:#333">fileModTime [<span style="color:#1e961e">DosDatetime</span>]: 2015-09-06 13:33:00</div>
<div class="a" style="left:45.0px;top:221.0px;width:5.4px;height:1px;border-top:1px dotted #6a6a6a"></div>
<div class="a mono" style="left:50.9px;top:215.5px;font-size:10px;line-height:13.333px;white-space:pre;letter-spacing:-0.5px;color:#333"><span style="color:#1414ff">crc32</span> = 0xC355A17C <span style="color:#b80808">= 3277169020</span></div>
<div class="a" style="left:45.0px;top:234.3px;width:5.4px;height:1px;border-top:1px dotted #6a6a6a"></div>
<div class="a mono" style="left:50.9px;top:228.9px;font-size:10px;line-height:13.333px;white-space:pre;letter-spacing:-0.5px;color:#333"><span style="color:#1414ff">lenBodyCompressed</span> = 0x2052 <span style="color:#b80808">= 8274</span></div>
<div class="a" style="left:45.0px;top:247.7px;width:5.4px;height:1px;border-top:1px dotted #6a6a6a"></div>
<div class="a mono" style="left:50.9px;top:242.2px;font-size:10px;line-height:13.333px;white-space:pre;letter-spacing:-0.5px;color:#333"><span style="color:#1414ff">lenBodyUncompressed</span> = 0x7600 <span style="color:#b80808">= 30208</span></div>
<div class="a" style="left:45.0px;top:261.0px;width:5.4px;height:1px;border-top:1px dotted #6a6a6a"></div>
<div class="a mono" style="left:50.9px;top:255.5px;font-size:10px;line-height:13.333px;white-space:pre;letter-spacing:-0.5px;color:#333"><span style="color:#1414ff">lenFileName</span> = 0x9 <span style="color:#b80808">= 9</span></div>
<div class="a" style="left:45.0px;top:274.3px;width:5.4px;height:1px;border-top:1px dotted #6a6a6a"></div>
<div class="a mono" style="left:50.9px;top:268.9px;font-size:10px;line-height:13.333px;white-space:pre;letter-spacing:-0.5px;color:#333"><span style="color:#1414ff">lenExtra</span> = 0x24 <span style="color:#b80808">= 36</span></div>
<div class="a" style="left:45.0px;top:287.7px;width:5.4px;height:1px;border-top:1px dotted #6a6a6a"></div>
<div class="a mono" style="left:50.9px;top:282.2px;font-size:10px;line-height:13.333px;white-space:pre;letter-spacing:-0.5px;color:#333"><span style="color:#1414ff">lenComment</span> = 0x0 <span style="color:#b80808">= 0</span></div>
<div class="a" style="left:45.0px;top:301.0px;width:5.4px;height:1px;border-top:1px dotted #6a6a6a"></div>
<div class="a mono" style="left:50.9px;top:295.5px;font-size:10px;line-height:13.333px;white-space:pre;letter-spacing:-0.5px;color:#333"><span style="color:#1414ff">diskNumberStart</span> = 0x0 <span style="color:#b80808">= 0</span></div>
<div class="a" style="left:45.0px;top:314.3px;width:5.4px;height:1px;border-top:1px dotted #6a6a6a"></div>
<div class="a mono" style="left:50.9px;top:308.9px;font-size:10px;line-height:13.333px;white-space:pre;letter-spacing:-0.5px;color:#333"><span style="color:#1414ff">intFileAttr</span> = 0x0 <span style="color:#b80808">= 0</span></div>
<div class="a" style="left:45.0px;top:327.7px;width:5.4px;height:1px;border-top:1px dotted #6a6a6a"></div>
<div class="a mono" style="left:50.9px;top:322.2px;font-size:10px;line-height:13.333px;white-space:pre;letter-spacing:-0.5px;color:#333"><span style="color:#1414ff">extFileAttr</span> = 0x20 <span style="color:#b80808">= 32</span></div>
<div class="a" style="left:45.0px;top:341.0px;width:5.4px;height:1px;border-top:1px dotted #6a6a6a"></div>
<div class="a mono" style="left:50.9px;top:335.5px;font-size:10px;line-height:13.333px;white-space:pre;letter-spacing:-0.5px;color:#333"><span style="color:#1414ff">ofsLocalHeader</span> = 0x0 <span style="color:#b80808">= 0</span></div>
<div class="a" style="left:45.0px;top:354.3px;width:5.4px;height:1px;border-top:1px dotted #6a6a6a"></div>
<div class="a mono" style="left:50.9px;top:348.9px;font-size:10px;line-height:13.333px;white-space:pre;letter-spacing:-0.5px;color:#333"><span style="color:#1414ff">fileName</span> = ex013.doc</div>
<svg class="a" style="left:42.0px;top:363.7px" width="5" height="8" viewBox="0 0 5 8"><path d="M0.5 0.5 L4.5 4 L0.5 7.5 Z" fill="none" stroke="#c9c9c9" stroke-width="1"/></svg>
<div class="a" style="left:47.0px;top:367.7px;width:3.4px;height:1px;border-top:1px dotted #6a6a6a"></div>
<div class="a mono" style="left:50.9px;top:362.2px;font-size:10px;line-height:13.333px;white-space:pre;letter-spacing:-0.5px;color:#333">extra [<span style="color:#1e961e">Extras</span>]</div>
<div class="a" style="left:675px;top:0;width:12px;height:365px;background:#fcfcfc"></div>
<div class="a" style="left:677.5px;top:5px;width:0;height:0;border-left:3.5px solid transparent;border-right:3.5px solid transparent;border-bottom:4px solid #8a8a8a"></div>
<div class="a" style="left:678px;top:15.5px;width:6px;height:215.5px;border-radius:3px;background:#909090"></div>
<div class="a" style="left:677.5px;top:356px;width:0;height:0;border-left:3.5px solid transparent;border-right:3.5px solid transparent;border-top:4px solid #8a8a8a"></div>
</div>
<div class="tab" style="left:900px;top:102px;width:65px;padding-left:8px">JS code</div>
<div class="tab" style="left:966.5px;top:102px;width:102.5px;padding-left:8.7px">JS code (debug)</div>
<div class="tab act" style="left:1071px;top:102px;width:91px;padding-left:8.7px">ex013.doc.zip</div>
<div class="maxi" style="left:1587px;top:105px"></div>
<div class="tab act" style="left:900px;top:118px;width:76px;padding-left:8px">hex viewer</div>
<div class="maxi" style="left:1587px;top:122px"></div>
<div class="a" style="left:900px;top:133px;width:688px;height:470px;background:#fff;overflow:hidden">
<div class="a" style="left:0;top:1px;width:675px;height:14px;background:#eee"></div>
<div class="a mono" style="left:64.2px;top:3px;font-size:10px;line-height:14px;font-weight:bold;color:#4a4a4a">0</div>
<div class="a mono" style="left:82.7px;top:3px;font-size:10px;line-height:14px;font-weight:bold;color:#4a4a4a">1</div>
<div class="a mono" style="left:101.1px;top:3px;font-size:10px;line-height:14px;font-weight:bold;color:#4a4a4a">2</div>
<div class="a mono" style="left:119.6px;top:3px;font-size:10px;line-height:14px;font-weight:bold;color:#4a4a4a">3</div>
<div class="a mono" style="left:138.0px;top:3px;font-size:10px;line-height:14px;font-weight:bold;color:#4a4a4a">4</div>
<div class="a mono" style="left:156.5px;top:3px;font-size:10px;line-height:14px;font-weight:bold;color:#4a4a4a">5</div>
<div class="a mono" style="left:175.0px;top:3px;font-size:10px;line-height:14px;font-weight:bold;color:#4a4a4a">6</div>
<div class="a mono" style="left:193.4px;top:3px;font-size:10px;line-height:14px;font-weight:bold;color:#4a4a4a">7</div>
<div class="a mono" style="left:219.9px;top:3px;font-size:10px;line-height:14px;font-weight:bold;color:#4a4a4a">8</div>
<div class="a mono" style="left:238.3px;top:3px;font-size:10px;line-height:14px;font-weight:bold;color:#4a4a4a">9</div>
<div class="a mono" style="left:256.8px;top:3px;font-size:10px;line-height:14px;font-weight:bold;color:#4a4a4a">A</div>
<div class="a mono" style="left:275.3px;top:3px;font-size:10px;line-height:14px;font-weight:bold;color:#4a4a4a">B</div>
<div class="a mono" style="left:293.7px;top:3px;font-size:10px;line-height:14px;font-weight:bold;color:#4a4a4a">C</div>
<div class="a mono" style="left:312.2px;top:3px;font-size:10px;line-height:14px;font-weight:bold;color:#4a4a4a">D</div>
<div class="a mono" style="left:330.6px;top:3px;font-size:10px;line-height:14px;font-weight:bold;color:#4a4a4a">E</div>
<div class="a mono" style="left:349.1px;top:3px;font-size:10px;line-height:14px;font-weight:bold;color:#4a4a4a">F</div>
<div class="a mono" style="left:368.5px;top:3px;font-size:10px;line-height:14px;font-weight:bold;color:#4a4a4a">0123456789ABCDEF</div>
<div class="a" style="left:62.5px;top:16.2px;width:34.7px;height:15.4px;background:#c5c5fa;border-radius:2.8px"></div>
<div class="a" style="left:99.4px;top:16.2px;width:34.7px;height:15.4px;background:#dcdcfc;border-radius:2.8px"></div>
<div class="a" style="left:136.2px;top:16.2px;width:34.7px;height:15.4px;background:#c5c5fa;border-radius:2.8px"></div>
<div class="a" style="left:173.1px;top:16.2px;width:16.3px;height:15.4px;background:#dcdcfc;border-radius:2.8px"></div>
<div class="a" style="left:191.5px;top:16.2px;width:19.3px;height:15.4px;background:#c5c5fa;border-radius:2.8px"></div>
<div class="a" style="left:212.9px;top:16.2px;width:38.2px;height:15.4px;background:#dcdcfc;border-radius:2.8px"></div>
<div class="a" style="left:253.3px;top:16.2px;width:16.3px;height:15.4px;background:#c5c5fa;border-radius:2.8px"></div>
<div class="a" style="left:271.7px;top:16.2px;width:16.3px;height:15.4px;background:#dcdcfc;border-radius:2.8px"></div>
<div class="a" style="left:290.2px;top:16.2px;width:16.3px;height:15.4px;background:#c5c5fa;border-radius:2.8px"></div>
<div class="a" style="left:308.6px;top:16.2px;width:16.3px;height:15.4px;background:#dcdcfc;border-radius:2.8px"></div>
<div class="a" style="left:327.0px;top:16.2px;width:34.7px;height:15.4px;background:#c5c5fa;border-radius:2.8px"></div>
<div class="a" style="left:62.5px;top:33.7px;width:34.7px;height:15.4px;background:#c5c5fa;border-radius:2.8px"></div>
<div class="a" style="left:99.4px;top:33.7px;width:71.6px;height:15.4px;background:#dcdcfc;border-radius:2.8px"></div>
<div class="a" style="left:173.1px;top:33.7px;width:78.1px;height:15.4px;background:#c5c5fa;border-radius:2.8px"></div>
<div class="a" style="left:253.3px;top:33.7px;width:34.7px;height:15.4px;background:#dcdcfc;border-radius:2.8px"></div>
<div class="a" style="left:290.2px;top:33.7px;width:34.7px;height:15.4px;background:#c5c5fa;border-radius:2.8px"></div>
<div class="a" style="left:327.0px;top:33.7px;width:34.7px;height:15.4px;background:#dcdcfc;border-radius:2.8px"></div>
<div class="a" style="left:62.5px;top:51.2px;width:126.9px;height:15.4px;background:#dcdcfc;border-radius:2.8px"></div>
<div class="a" style="left:191.5px;top:51.2px;width:170.2px;height:15.4px;background:#c5c5fa;border-radius:2.8px"></div>
<div class="a" style="left:61.7px;top:68.7px;width:299.0px;height:15.4px;background:#c5c5fa;border-radius:0"></div>
<div class="a" style="left:61.7px;top:86.2px;width:299.0px;height:15.4px;background:#c5c5fa;border-radius:0"></div>
<div class="a" style="left:61.7px;top:103.7px;width:299.0px;height:15.4px;background:#c5c5fa;border-radius:0"></div>
<div class="a" style="left:61.7px;top:121.2px;width:299.0px;height:15.4px;background:#c5c5fa;border-radius:0"></div>
<div class="a" style="left:61.7px;top:138.7px;width:299.0px;height:15.4px;background:#c5c5fa;border-radius:0"></div>
<div class="a" style="left:61.7px;top:156.2px;width:299.0px;height:15.4px;background:#c5c5fa;border-radius:0"></div>
<div class="a" style="left:61.7px;top:173.7px;width:299.0px;height:15.4px;background:#c5c5fa;border-radius:0"></div>
<div class="a" style="left:61.7px;top:191.2px;width:299.0px;height:15.4px;background:#c5c5fa;border-radius:0"></div>
<div class="a" style="left:61.7px;top:208.7px;width:299.0px;height:15.4px;background:#c5c5fa;border-radius:0"></div>
<div class="a" style="left:61.7px;top:226.2px;width:299.0px;height:15.4px;background:#c5c5fa;border-radius:0"></div>
<div class="a" style="left:61.7px;top:243.7px;width:299.0px;height:15.4px;background:#c5c5fa;border-radius:0"></div>
<div class="a" style="left:61.7px;top:261.2px;width:299.0px;height:15.4px;background:#c5c5fa;border-radius:0"></div>
<div class="a" style="left:61.7px;top:278.7px;width:299.0px;height:15.4px;background:#c5c5fa;border-radius:0"></div>
<div class="a" style="left:61.7px;top:296.2px;width:299.0px;height:15.4px;background:#c5c5fa;border-radius:0"></div>
<div class="a" style="left:61.7px;top:313.7px;width:299.0px;height:15.4px;background:#c5c5fa;border-radius:0"></div>
<div class="a" style="left:61.7px;top:331.2px;width:299.0px;height:15.4px;background:#c5c5fa;border-radius:0"></div>
<div class="a" style="left:61.7px;top:348.7px;width:299.0px;height:15.4px;background:#c5c5fa;border-radius:0"></div>
<div class="a" style="left:61.7px;top:366.2px;width:299.0px;height:15.4px;background:#c5c5fa;border-radius:0"></div>
<div class="a" style="left:61.7px;top:383.7px;width:299.0px;height:15.4px;background:#c5c5fa;border-radius:0"></div>
<div class="a" style="left:61.7px;top:401.2px;width:299.0px;height:15.4px;background:#c5c5fa;border-radius:0"></div>
<div class="a" style="left:61.7px;top:418.7px;width:299.0px;height:15.4px;background:#c5c5fa;border-radius:0"></div>
<div class="a" style="left:61.7px;top:436.2px;width:299.0px;height:15.4px;background:#c5c5fa;border-radius:0"></div>
<div class="a" style="left:61.7px;top:453.7px;width:299.0px;height:15.4px;background:#c5c5fa;border-radius:0"></div>
<div class="a mono" style="left:7px;top:16.6px;font-size:10px;line-height:15.3px;color:#d85050">00000000</div>
<div class="a mono" style="left:64.2px;top:16.6px;font-size:10px;line-height:15.3px;color:#6a6a6a">50</div>
<div class="a mono" style="left:82.6px;top:16.6px;font-size:10px;line-height:15.3px;color:#6a6a6a">4b</div>
<div class="a mono" style="left:101.1px;top:16.6px;font-size:10px;line-height:15.3px;color:#6a6a6a">03</div>
<div class="a mono" style="left:119.5px;top:16.6px;font-size:10px;line-height:15.3px;color:#6a6a6a">04</div>
<div class="a mono" style="left:137.9px;top:16.6px;font-size:10px;line-height:15.3px;color:#6a6a6a">14</div>
<div class="a mono" style="left:156.3px;top:16.6px;font-size:10px;line-height:15.3px;color:#6a6a6a">00</div>
<div class="a mono" style="left:174.8px;top:16.6px;font-size:10px;line-height:15.3px;color:#6a6a6a">01</div>
<div class="a mono" style="left:193.2px;top:16.6px;font-size:10px;line-height:15.3px;color:#6a6a6a">00</div>
<div class="a mono" style="left:218.1px;top:16.6px;font-size:10px;line-height:15.3px;color:#6a6a6a">08</div>
<div class="a mono" style="left:236.6px;top:16.6px;font-size:10px;line-height:15.3px;color:#6a6a6a">00</div>
<div class="a mono" style="left:255.0px;top:16.6px;font-size:10px;line-height:15.3px;color:#6a6a6a">20</div>
<div class="a mono" style="left:273.4px;top:16.6px;font-size:10px;line-height:15.3px;color:#6a6a6a">6c</div>
<div class="a mono" style="left:291.9px;top:16.6px;font-size:10px;line-height:15.3px;color:#6a6a6a">26</div>
<div class="a mono" style="left:310.3px;top:16.6px;font-size:10px;line-height:15.3px;color:#6a6a6a">47</div>
<div class="a mono" style="left:328.7px;top:16.6px;font-size:10px;line-height:15.3px;color:#6a6a6a">7c</div>
<div class="a mono" style="left:347.1px;top:16.6px;font-size:10px;line-height:15.3px;color:#6a6a6a">a1</div>
<div class="a mono" style="left:367.5px;top:16.6px;font-size:10px;line-height:15.3px;color:#666;white-space:pre">PK........ l&amp;G|¡</div>
<div class="a mono" style="left:7px;top:34.1px;font-size:10px;line-height:15.3px;color:#d85050">00000010</div>
<div class="a mono" style="left:64.2px;top:34.1px;font-size:10px;line-height:15.3px;color:#6a6a6a">55</div>
<div class="a mono" style="left:82.6px;top:34.1px;font-size:10px;line-height:15.3px;color:#6a6a6a">c3</div>
<div class="a mono" style="left:101.1px;top:34.1px;font-size:10px;line-height:15.3px;color:#6a6a6a">52</div>
<div class="a mono" style="left:119.5px;top:34.1px;font-size:10px;line-height:15.3px;color:#6a6a6a">20</div>
<div class="a mono" style="left:137.9px;top:34.1px;font-size:10px;line-height:15.3px;color:#6a6a6a">00</div>
<div class="a mono" style="left:156.3px;top:34.1px;font-size:10px;line-height:15.3px;color:#6a6a6a">00</div>
<div class="a mono" style="left:174.8px;top:34.1px;font-size:10px;line-height:15.3px;color:#6a6a6a">00</div>
<div class="a mono" style="left:193.2px;top:34.1px;font-size:10px;line-height:15.3px;color:#6a6a6a">76</div>
<div class="a mono" style="left:218.1px;top:34.1px;font-size:10px;line-height:15.3px;color:#6a6a6a">00</div>
<div class="a mono" style="left:236.6px;top:34.1px;font-size:10px;line-height:15.3px;color:#6a6a6a">00</div>
<div class="a mono" style="left:255.0px;top:34.1px;font-size:10px;line-height:15.3px;color:#6a6a6a">09</div>
<div class="a mono" style="left:273.4px;top:34.1px;font-size:10px;line-height:15.3px;color:#6a6a6a">00</div>
<div class="a mono" style="left:291.9px;top:34.1px;font-size:10px;line-height:15.3px;color:#6a6a6a">00</div>
<div class="a mono" style="left:310.3px;top:34.1px;font-size:10px;line-height:15.3px;color:#6a6a6a">00</div>
<div class="a mono" style="left:328.7px;top:34.1px;font-size:10px;line-height:15.3px;color:#6a6a6a">65</div>
<div class="a mono" style="left:347.1px;top:34.1px;font-size:10px;line-height:15.3px;color:#6a6a6a">78</div>
<div class="a mono" style="left:367.5px;top:34.1px;font-size:10px;line-height:15.3px;color:#666;white-space:pre">UÃR ...v......ex</div>
<div class="a mono" style="left:7px;top:51.6px;font-size:10px;line-height:15.3px;color:#d85050">00000020</div>
<div class="a mono" style="left:64.2px;top:51.6px;font-size:10px;line-height:15.3px;color:#6a6a6a">30</div>
<div class="a mono" style="left:82.6px;top:51.6px;font-size:10px;line-height:15.3px;color:#6a6a6a">31</div>
<div class="a mono" style="left:101.1px;top:51.6px;font-size:10px;line-height:15.3px;color:#6a6a6a">33</div>
<div class="a mono" style="left:119.5px;top:51.6px;font-size:10px;line-height:15.3px;color:#6a6a6a">2e</div>
<div class="a mono" style="left:137.9px;top:51.6px;font-size:10px;line-height:15.3px;color:#6a6a6a">64</div>
<div class="a mono" style="left:156.3px;top:51.6px;font-size:10px;line-height:15.3px;color:#6a6a6a">6f</div>
<div class="a mono" style="left:174.8px;top:51.6px;font-size:10px;line-height:15.3px;color:#6a6a6a">63</div>
<div class="a mono" style="left:193.2px;top:51.6px;font-size:10px;line-height:15.3px;color:#6a6a6a">2e</div>
<div class="a mono" style="left:218.1px;top:51.6px;font-size:10px;line-height:15.3px;color:#6a6a6a">93</div>
<div class="a mono" style="left:236.6px;top:51.6px;font-size:10px;line-height:15.3px;color:#6a6a6a">e4</div>
<div class="a mono" style="left:255.0px;top:51.6px;font-size:10px;line-height:15.3px;color:#6a6a6a">c9</div>
<div class="a mono" style="left:273.4px;top:51.6px;font-size:10px;line-height:15.3px;color:#6a6a6a">09</div>
<div class="a mono" style="left:291.9px;top:51.6px;font-size:10px;line-height:15.3px;color:#6a6a6a">76</div>
<div class="a mono" style="left:310.3px;top:51.6px;font-size:10px;line-height:15.3px;color:#6a6a6a">00</div>
<div class="a mono" style="left:328.7px;top:51.6px;font-size:10px;line-height:15.3px;color:#6a6a6a">7d</div>
<div class="a mono" style="left:347.1px;top:51.6px;font-size:10px;line-height:15.3px;color:#6a6a6a">de</div>
<div class="a mono" style="left:367.5px;top:51.6px;font-size:10px;line-height:15.3px;color:#666;white-space:pre">013.doc..äÉ.v.}Þ</div>
<div class="a mono" style="left:7px;top:69.1px;font-size:10px;line-height:15.3px;color:#d85050">00000030</div>
<div class="a mono" style="left:64.2px;top:69.1px;font-size:10px;line-height:15.3px;color:#6a6a6a">f5</div>
<div class="a mono" style="left:82.6px;top:69.1px;font-size:10px;line-height:15.3px;color:#6a6a6a">e3</div>
<div class="a mono" style="left:101.1px;top:69.1px;font-size:10px;line-height:15.3px;color:#6a6a6a">f5</div>
<div class="a mono" style="left:119.5px;top:69.1px;font-size:10px;line-height:15.3px;color:#6a6a6a">f5</div>
<div class="a mono" style="left:137.9px;top:69.1px;font-size:10px;line-height:15.3px;color:#6a6a6a">64</div>
<div class="a mono" style="left:156.3px;top:69.1px;font-size:10px;line-height:15.3px;color:#6a6a6a">bc</div>
<div class="a mono" style="left:174.8px;top:69.1px;font-size:10px;line-height:15.3px;color:#6a6a6a">47</div>
<div class="a mono" style="left:193.2px;top:69.1px;font-size:10px;line-height:15.3px;color:#6a6a6a">1c</div>
<div class="a mono" style="left:218.1px;top:69.1px;font-size:10px;line-height:15.3px;color:#6a6a6a">33</div>
<div class="a mono" style="left:236.6px;top:69.1px;font-size:10px;line-height:15.3px;color:#6a6a6a">08</div>
<div class="a mono" style="left:255.0px;top:69.1px;font-size:10px;line-height:15.3px;color:#6a6a6a">2d</div>
<div class="a mono" style="left:273.4px;top:69.1px;font-size:10px;line-height:15.3px;color:#6a6a6a">99</div>
<div class="a mono" style="left:291.9px;top:69.1px;font-size:10px;line-height:15.3px;color:#6a6a6a">88</div>
<div class="a mono" style="left:310.3px;top:69.1px;font-size:10px;line-height:15.3px;color:#6a6a6a">94</div>
<div class="a mono" style="left:328.7px;top:69.1px;font-size:10px;line-height:15.3px;color:#6a6a6a">7b</div>
<div class="a mono" style="left:347.1px;top:69.1px;font-size:10px;line-height:15.3px;color:#6a6a6a">50</div>
<div class="a mono" style="left:367.5px;top:69.1px;font-size:10px;line-height:15.3px;color:#666;white-space:pre">õãõõd¼G.3.-...{P</div>
<div class="a mono" style="left:7px;top:86.6px;font-size:10px;line-height:15.3px;color:#d85050">00000040</div>
<div class="a mono" style="left:64.2px;top:86.6px;font-size:10px;line-height:15.3px;color:#6a6a6a">ac</div>
<div class="a mono" style="left:82.6px;top:86.6px;font-size:10px;line-height:15.3px;color:#6a6a6a">ba</div>
<div class="a mono" style="left:101.1px;top:86.6px;font-size:10px;line-height:15.3px;color:#6a6a6a">53</div>
<div class="a mono" style="left:119.5px;top:86.6px;font-size:10px;line-height:15.3px;color:#6a6a6a">c9</div>
<div class="a mono" style="left:137.9px;top:86.6px;font-size:10px;line-height:15.3px;color:#6a6a6a">9b</div>
<div class="a mono" style="left:156.3px;top:86.6px;font-size:10px;line-height:15.3px;color:#6a6a6a">f7</div>
<div class="a mono" style="left:174.8px;top:86.6px;font-size:10px;line-height:15.3px;color:#6a6a6a">0e</div>
<div class="a mono" style="left:193.2px;top:86.6px;font-size:10px;line-height:15.3px;color:#6a6a6a">5d</div>
<div class="a mono" style="left:218.1px;top:86.6px;font-size:10px;line-height:15.3px;color:#6a6a6a">d3</div>
<div class="a mono" style="left:236.6px;top:86.6px;font-size:10px;line-height:15.3px;color:#6a6a6a">37</div>
<div class="a mono" style="left:255.0px;top:86.6px;font-size:10px;line-height:15.3px;color:#6a6a6a">85</div>
<div class="a mono" style="left:273.4px;top:86.6px;font-size:10px;line-height:15.3px;color:#6a6a6a">53</div>
<div class="a mono" style="left:291.9px;top:86.6px;font-size:10px;line-height:15.3px;color:#6a6a6a">ac</div>
<div class="a mono" style="left:310.3px;top:86.6px;font-size:10px;line-height:15.3px;color:#6a6a6a">6a</div>
<div class="a mono" style="left:328.7px;top:86.6px;font-size:10px;line-height:15.3px;color:#6a6a6a">4a</div>
<div class="a mono" style="left:347.1px;top:86.6px;font-size:10px;line-height:15.3px;color:#6a6a6a">6b</div>
<div class="a mono" style="left:367.5px;top:86.6px;font-size:10px;line-height:15.3px;color:#666;white-space:pre">¬ºSÉ.÷.]Ó7.S¬jJk</div>
<div class="a mono" style="left:7px;top:104.1px;font-size:10px;line-height:15.3px;color:#d85050">00000050</div>
<div class="a mono" style="left:64.2px;top:104.1px;font-size:10px;line-height:15.3px;color:#6a6a6a">3e</div>
<div class="a mono" style="left:82.6px;top:104.1px;font-size:10px;line-height:15.3px;color:#6a6a6a">02</div>
<div class="a mono" style="left:101.1px;top:104.1px;font-size:10px;line-height:15.3px;color:#6a6a6a">22</div>
<div class="a mono" style="left:119.5px;top:104.1px;font-size:10px;line-height:15.3px;color:#6a6a6a">64</div>
<div class="a mono" style="left:137.9px;top:104.1px;font-size:10px;line-height:15.3px;color:#6a6a6a">a8</div>
<div class="a mono" style="left:156.3px;top:104.1px;font-size:10px;line-height:15.3px;color:#6a6a6a">b5</div>
<div class="a mono" style="left:174.8px;top:104.1px;font-size:10px;line-height:15.3px;color:#6a6a6a">93</div>
<div class="a mono" style="left:193.2px;top:104.1px;font-size:10px;line-height:15.3px;color:#6a6a6a">75</div>
<div class="a mono" style="left:218.1px;top:104.1px;font-size:10px;line-height:15.3px;color:#6a6a6a">44</div>
<div class="a mono" style="left:236.6px;top:104.1px;font-size:10px;line-height:15.3px;color:#6a6a6a">72</div>
<div class="a mono" style="left:255.0px;top:104.1px;font-size:10px;line-height:15.3px;color:#6a6a6a">51</div>
<div class="a mono" style="left:273.4px;top:104.1px;font-size:10px;line-height:15.3px;color:#6a6a6a">bc</div>
<div class="a mono" style="left:291.9px;top:104.1px;font-size:10px;line-height:15.3px;color:#6a6a6a">42</div>
<div class="a mono" style="left:310.3px;top:104.1px;font-size:10px;line-height:15.3px;color:#6a6a6a">6b</div>
<div class="a mono" style="left:328.7px;top:104.1px;font-size:10px;line-height:15.3px;color:#6a6a6a">01</div>
<div class="a mono" style="left:347.1px;top:104.1px;font-size:10px;line-height:15.3px;color:#6a6a6a">61</div>
<div class="a mono" style="left:367.5px;top:104.1px;font-size:10px;line-height:15.3px;color:#666;white-space:pre">&gt;."d¨µ.uDrQ¼Bk.a</div>
<div class="a mono" style="left:7px;top:121.6px;font-size:10px;line-height:15.3px;color:#d85050">00000060</div>
<div class="a mono" style="left:64.2px;top:121.6px;font-size:10px;line-height:15.3px;color:#6a6a6a">dd</div>
<div class="a mono" style="left:82.6px;top:121.6px;font-size:10px;line-height:15.3px;color:#6a6a6a">2f</div>
<div class="a mono" style="left:101.1px;top:121.6px;font-size:10px;line-height:15.3px;color:#6a6a6a">4c</div>
<div class="a mono" style="left:119.5px;top:121.6px;font-size:10px;line-height:15.3px;color:#6a6a6a">4d</div>
<div class="a mono" style="left:137.9px;top:121.6px;font-size:10px;line-height:15.3px;color:#6a6a6a">39</div>
<div class="a mono" style="left:156.3px;top:121.6px;font-size:10px;line-height:15.3px;color:#6a6a6a">95</div>
<div class="a mono" style="left:174.8px;top:121.6px;font-size:10px;line-height:15.3px;color:#6a6a6a">12</div>
<div class="a mono" style="left:193.2px;top:121.6px;font-size:10px;line-height:15.3px;color:#6a6a6a">25</div>
<div class="a mono" style="left:218.1px;top:121.6px;font-size:10px;line-height:15.3px;color:#6a6a6a">97</div>
<div class="a mono" style="left:236.6px;top:121.6px;font-size:10px;line-height:15.3px;color:#6a6a6a">c0</div>
<div class="a mono" style="left:255.0px;top:121.6px;font-size:10px;line-height:15.3px;color:#6a6a6a">44</div>
<div class="a mono" style="left:273.4px;top:121.6px;font-size:10px;line-height:15.3px;color:#6a6a6a">6b</div>
<div class="a mono" style="left:291.9px;top:121.6px;font-size:10px;line-height:15.3px;color:#6a6a6a">19</div>
<div class="a mono" style="left:310.3px;top:121.6px;font-size:10px;line-height:15.3px;color:#6a6a6a">4b</div>
<div class="a mono" style="left:328.7px;top:121.6px;font-size:10px;line-height:15.3px;color:#6a6a6a">b7</div>
<div class="a mono" style="left:347.1px;top:121.6px;font-size:10px;line-height:15.3px;color:#6a6a6a">d6</div>
<div class="a mono" style="left:367.5px;top:121.6px;font-size:10px;line-height:15.3px;color:#666;white-space:pre">Ý/LM9..%.ÀDk.K·Ö</div>
<div class="a mono" style="left:7px;top:139.1px;font-size:10px;line-height:15.3px;color:#d85050">00000070</div>
<div class="a mono" style="left:64.2px;top:139.1px;font-size:10px;line-height:15.3px;color:#6a6a6a">ae</div>
<div class="a mono" style="left:82.6px;top:139.1px;font-size:10px;line-height:15.3px;color:#6a6a6a">62</div>
<div class="a mono" style="left:101.1px;top:139.1px;font-size:10px;line-height:15.3px;color:#6a6a6a">67</div>
<div class="a mono" style="left:119.5px;top:139.1px;font-size:10px;line-height:15.3px;color:#6a6a6a">a0</div>
<div class="a mono" style="left:137.9px;top:139.1px;font-size:10px;line-height:15.3px;color:#6a6a6a">e3</div>
<div class="a mono" style="left:156.3px;top:139.1px;font-size:10px;line-height:15.3px;color:#6a6a6a">87</div>
<div class="a mono" style="left:174.8px;top:139.1px;font-size:10px;line-height:15.3px;color:#6a6a6a">79</div>
<div class="a mono" style="left:193.2px;top:139.1px;font-size:10px;line-height:15.3px;color:#6a6a6a">71</div>
<div class="a mono" style="left:218.1px;top:139.1px;font-size:10px;line-height:15.3px;color:#6a6a6a">d1</div>
<div class="a mono" style="left:236.6px;top:139.1px;font-size:10px;line-height:15.3px;color:#6a6a6a">6f</div>
<div class="a mono" style="left:255.0px;top:139.1px;font-size:10px;line-height:15.3px;color:#6a6a6a">e4</div>
<div class="a mono" style="left:273.4px;top:139.1px;font-size:10px;line-height:15.3px;color:#6a6a6a">85</div>
<div class="a mono" style="left:291.9px;top:139.1px;font-size:10px;line-height:15.3px;color:#6a6a6a">ee</div>
<div class="a mono" style="left:310.3px;top:139.1px;font-size:10px;line-height:15.3px;color:#6a6a6a">bc</div>
<div class="a mono" style="left:328.7px;top:139.1px;font-size:10px;line-height:15.3px;color:#6a6a6a">2e</div>
<div class="a mono" style="left:347.1px;top:139.1px;font-size:10px;line-height:15.3px;color:#6a6a6a">ba</div>
<div class="a mono" style="left:367.5px;top:139.1px;font-size:10px;line-height:15.3px;color:#666;white-space:pre">®bg.ã.yqÑoä.î¼.º</div>
<div class="a mono" style="left:7px;top:156.6px;font-size:10px;line-height:15.3px;color:#d85050">00000080</div>
<div class="a mono" style="left:64.2px;top:156.6px;font-size:10px;line-height:15.3px;color:#6a6a6a">0c</div>
<div class="a mono" style="left:82.6px;top:156.6px;font-size:10px;line-height:15.3px;color:#6a6a6a">3c</div>
<div class="a mono" style="left:101.1px;top:156.6px;font-size:10px;line-height:15.3px;color:#6a6a6a">76</div>
<div class="a mono" style="left:119.5px;top:156.6px;font-size:10px;line-height:15.3px;color:#6a6a6a">2b</div>
<div class="a mono" style="left:137.9px;top:156.6px;font-size:10px;line-height:15.3px;color:#6a6a6a">37</div>
<div class="a mono" style="left:156.3px;top:156.6px;font-size:10px;line-height:15.3px;color:#6a6a6a">7f</div>
<div class="a mono" style="left:174.8px;top:156.6px;font-size:10px;line-height:15.3px;color:#6a6a6a">be</div>
<div class="a mono" style="left:193.2px;top:156.6px;font-size:10px;line-height:15.3px;color:#6a6a6a">82</div>
<div class="a mono" style="left:218.1px;top:156.6px;font-size:10px;line-height:15.3px;color:#6a6a6a">71</div>
<div class="a mono" style="left:236.6px;top:156.6px;font-size:10px;line-height:15.3px;color:#6a6a6a">e3</div>
<div class="a mono" style="left:255.0px;top:156.6px;font-size:10px;line-height:15.3px;color:#6a6a6a">bd</div>
<div class="a mono" style="left:273.4px;top:156.6px;font-size:10px;line-height:15.3px;color:#6a6a6a">cf</div>
<div class="a mono" style="left:291.9px;top:156.6px;font-size:10px;line-height:15.3px;color:#6a6a6a">74</div>
<div class="a mono" style="left:310.3px;top:156.6px;font-size:10px;line-height:15.3px;color:#6a6a6a">87</div>
<div class="a mono" style="left:328.7px;top:156.6px;font-size:10px;line-height:15.3px;color:#6a6a6a">1e</div>
<div class="a mono" style="left:347.1px;top:156.6px;font-size:10px;line-height:15.3px;color:#6a6a6a">fd</div>
<div class="a mono" style="left:367.5px;top:156.6px;font-size:10px;line-height:15.3px;color:#666;white-space:pre">.&lt;v+7.¾.qã½Ït..ý</div>
<div class="a mono" style="left:7px;top:174.1px;font-size:10px;line-height:15.3px;color:#d85050">00000090</div>
<div class="a mono" style="left:64.2px;top:174.1px;font-size:10px;line-height:15.3px;color:#6a6a6a">eb</div>
<div class="a mono" style="left:82.6px;top:174.1px;font-size:10px;line-height:15.3px;color:#6a6a6a">d0</div>
<div class="a mono" style="left:101.1px;top:174.1px;font-size:10px;line-height:15.3px;color:#6a6a6a">92</div>
<div class="a mono" style="left:119.5px;top:174.1px;font-size:10px;line-height:15.3px;color:#6a6a6a">97</div>
<div class="a mono" style="left:137.9px;top:174.1px;font-size:10px;line-height:15.3px;color:#6a6a6a">1b</div>
<div class="a mono" style="left:156.3px;top:174.1px;font-size:10px;line-height:15.3px;color:#6a6a6a">5f</div>
<div class="a mono" style="left:174.8px;top:174.1px;font-size:10px;line-height:15.3px;color:#6a6a6a">e4</div>
<div class="a mono" style="left:193.2px;top:174.1px;font-size:10px;line-height:15.3px;color:#6a6a6a">02</div>
<div class="a mono" style="left:218.1px;top:174.1px;font-size:10px;line-height:15.3px;color:#6a6a6a">ae</div>
<div class="a mono" style="left:236.6px;top:174.1px;font-size:10px;line-height:15.3px;color:#6a6a6a">97</div>
<div class="a mono" style="left:255.0px;top:174.1px;font-size:10px;line-height:15.3px;color:#6a6a6a">bf</div>
<div class="a mono" style="left:273.4px;top:174.1px;font-size:10px;line-height:15.3px;color:#6a6a6a">88</div>
<div class="a mono" style="left:291.9px;top:174.1px;font-size:10px;line-height:15.3px;color:#6a6a6a">35</div>
<div class="a mono" style="left:310.3px;top:174.1px;font-size:10px;line-height:15.3px;color:#6a6a6a">3b</div>
<div class="a mono" style="left:328.7px;top:174.1px;font-size:10px;line-height:15.3px;color:#6a6a6a">22</div>
<div class="a mono" style="left:347.1px;top:174.1px;font-size:10px;line-height:15.3px;color:#6a6a6a">49</div>
<div class="a mono" style="left:367.5px;top:174.1px;font-size:10px;line-height:15.3px;color:#666;white-space:pre">ëÐ..._ä.®.¿.5;"I</div>
<div class="a mono" style="left:7px;top:191.6px;font-size:10px;line-height:15.3px;color:#d85050">000000a0</div>
<div class="a mono" style="left:64.2px;top:191.6px;font-size:10px;line-height:15.3px;color:#6a6a6a">ed</div>
<div class="a mono" style="left:82.6px;top:191.6px;font-size:10px;line-height:15.3px;color:#6a6a6a">bd</div>
<div class="a mono" style="left:101.1px;top:191.6px;font-size:10px;line-height:15.3px;color:#6a6a6a">17</div>
<div class="a mono" style="left:119.5px;top:191.6px;font-size:10px;line-height:15.3px;color:#6a6a6a">88</div>
<div class="a mono" style="left:137.9px;top:191.6px;font-size:10px;line-height:15.3px;color:#6a6a6a">f5</div>
<div class="a mono" style="left:156.3px;top:191.6px;font-size:10px;line-height:15.3px;color:#6a6a6a">0a</div>
<div class="a mono" style="left:174.8px;top:191.6px;font-size:10px;line-height:15.3px;color:#6a6a6a">d2</div>
<div class="a mono" style="left:193.2px;top:191.6px;font-size:10px;line-height:15.3px;color:#6a6a6a">95</div>
<div class="a mono" style="left:218.1px;top:191.6px;font-size:10px;line-height:15.3px;color:#6a6a6a">99</div>
<div class="a mono" style="left:236.6px;top:191.6px;font-size:10px;line-height:15.3px;color:#6a6a6a">fb</div>
<div class="a mono" style="left:255.0px;top:191.6px;font-size:10px;line-height:15.3px;color:#6a6a6a">c7</div>
<div class="a mono" style="left:273.4px;top:191.6px;font-size:10px;line-height:15.3px;color:#6a6a6a">c9</div>
<div class="a mono" style="left:291.9px;top:191.6px;font-size:10px;line-height:15.3px;color:#6a6a6a">66</div>
<div class="a mono" style="left:310.3px;top:191.6px;font-size:10px;line-height:15.3px;color:#6a6a6a">da</div>
<div class="a mono" style="left:328.7px;top:191.6px;font-size:10px;line-height:15.3px;color:#6a6a6a">3d</div>
<div class="a mono" style="left:347.1px;top:191.6px;font-size:10px;line-height:15.3px;color:#6a6a6a">27</div>
<div class="a mono" style="left:367.5px;top:191.6px;font-size:10px;line-height:15.3px;color:#666;white-space:pre">í½..õ.Ò..ûÇÉfÚ='</div>
<div class="a mono" style="left:7px;top:209.1px;font-size:10px;line-height:15.3px;color:#d85050">000000b0</div>
<div class="a mono" style="left:64.2px;top:209.1px;font-size:10px;line-height:15.3px;color:#6a6a6a">f9</div>
<div class="a mono" style="left:82.6px;top:209.1px;font-size:10px;line-height:15.3px;color:#6a6a6a">56</div>
<div class="a mono" style="left:101.1px;top:209.1px;font-size:10px;line-height:15.3px;color:#6a6a6a">ad</div>
<div class="a mono" style="left:119.5px;top:209.1px;font-size:10px;line-height:15.3px;color:#6a6a6a">c2</div>
<div class="a mono" style="left:137.9px;top:209.1px;font-size:10px;line-height:15.3px;color:#6a6a6a">0d</div>
<div class="a mono" style="left:156.3px;top:209.1px;font-size:10px;line-height:15.3px;color:#6a6a6a">4f</div>
<div class="a mono" style="left:174.8px;top:209.1px;font-size:10px;line-height:15.3px;color:#6a6a6a">fa</div>
<div class="a mono" style="left:193.2px;top:209.1px;font-size:10px;line-height:15.3px;color:#6a6a6a">4b</div>
<div class="a mono" style="left:218.1px;top:209.1px;font-size:10px;line-height:15.3px;color:#6a6a6a">cb</div>
<div class="a mono" style="left:236.6px;top:209.1px;font-size:10px;line-height:15.3px;color:#6a6a6a">bd</div>
<div class="a mono" style="left:255.0px;top:209.1px;font-size:10px;line-height:15.3px;color:#6a6a6a">ba</div>
<div class="a mono" style="left:273.4px;top:209.1px;font-size:10px;line-height:15.3px;color:#6a6a6a">11</div>
<div class="a mono" style="left:291.9px;top:209.1px;font-size:10px;line-height:15.3px;color:#6a6a6a">f9</div>
<div class="a mono" style="left:310.3px;top:209.1px;font-size:10px;line-height:15.3px;color:#6a6a6a">95</div>
<div class="a mono" style="left:328.7px;top:209.1px;font-size:10px;line-height:15.3px;color:#6a6a6a">8c</div>
<div class="a mono" style="left:347.1px;top:209.1px;font-size:10px;line-height:15.3px;color:#6a6a6a">5f</div>
<div class="a mono" style="left:367.5px;top:209.1px;font-size:10px;line-height:15.3px;color:#666;white-space:pre">ùV.Â.OúKË½º.ù.._</div>
<div class="a mono" style="left:7px;top:226.6px;font-size:10px;line-height:15.3px;color:#d85050">000000c0</div>
<div class="a mono" style="left:64.2px;top:226.6px;font-size:10px;line-height:15.3px;color:#6a6a6a">5e</div>
<div class="a mono" style="left:82.6px;top:226.6px;font-size:10px;line-height:15.3px;color:#6a6a6a">86</div>
<div class="a mono" style="left:101.1px;top:226.6px;font-size:10px;line-height:15.3px;color:#6a6a6a">6b</div>
<div class="a mono" style="left:119.5px;top:226.6px;font-size:10px;line-height:15.3px;color:#6a6a6a">70</div>
<div class="a mono" style="left:137.9px;top:226.6px;font-size:10px;line-height:15.3px;color:#6a6a6a">11</div>
<div class="a mono" style="left:156.3px;top:226.6px;font-size:10px;line-height:15.3px;color:#6a6a6a">11</div>
<div class="a mono" style="left:174.8px;top:226.6px;font-size:10px;line-height:15.3px;color:#6a6a6a">d9</div>
<div class="a mono" style="left:193.2px;top:226.6px;font-size:10px;line-height:15.3px;color:#6a6a6a">c5</div>
<div class="a mono" style="left:218.1px;top:226.6px;font-size:10px;line-height:15.3px;color:#6a6a6a">2b</div>
<div class="a mono" style="left:236.6px;top:226.6px;font-size:10px;line-height:15.3px;color:#6a6a6a">d4</div>
<div class="a mono" style="left:255.0px;top:226.6px;font-size:10px;line-height:15.3px;color:#6a6a6a">b8</div>
<div class="a mono" style="left:273.4px;top:226.6px;font-size:10px;line-height:15.3px;color:#6a6a6a">62</div>
<div class="a mono" style="left:291.9px;top:226.6px;font-size:10px;line-height:15.3px;color:#6a6a6a">d9</div>
<div class="a mono" style="left:310.3px;top:226.6px;font-size:10px;line-height:15.3px;color:#6a6a6a">b5</div>
<div class="a mono" style="left:328.7px;top:226.6px;font-size:10px;line-height:15.3px;color:#6a6a6a">54</div>
<div class="a mono" style="left:347.1px;top:226.6px;font-size:10px;line-height:15.3px;color:#6a6a6a">f6</div>
<div class="a mono" style="left:367.5px;top:226.6px;font-size:10px;line-height:15.3px;color:#666;white-space:pre">^.kp..ÙÅ+Ô¸bÙµTö</div>
<div class="a mono" style="left:7px;top:244.1px;font-size:10px;line-height:15.3px;color:#d85050">000000d0</div>
<div class="a mono" style="left:64.2px;top:244.1px;font-size:10px;line-height:15.3px;color:#6a6a6a">9e</div>
<div class="a mono" style="left:82.6px;top:244.1px;font-size:10px;line-height:15.3px;color:#6a6a6a">73</div>
<div class="a mono" style="left:101.1px;top:244.1px;font-size:10px;line-height:15.3px;color:#6a6a6a">cc</div>
<div class="a mono" style="left:119.5px;top:244.1px;font-size:10px;line-height:15.3px;color:#6a6a6a">b4</div>
<div class="a mono" style="left:137.9px;top:244.1px;font-size:10px;line-height:15.3px;color:#6a6a6a">65</div>
<div class="a mono" style="left:156.3px;top:244.1px;font-size:10px;line-height:15.3px;color:#6a6a6a">f4</div>
<div class="a mono" style="left:174.8px;top:244.1px;font-size:10px;line-height:15.3px;color:#6a6a6a">fd</div>
<div class="a mono" style="left:193.2px;top:244.1px;font-size:10px;line-height:15.3px;color:#6a6a6a">bc</div>
<div class="a mono" style="left:218.1px;top:244.1px;font-size:10px;line-height:15.3px;color:#6a6a6a">97</div>
<div class="a mono" style="left:236.6px;top:244.1px;font-size:10px;line-height:15.3px;color:#6a6a6a">a8</div>
<div class="a mono" style="left:255.0px;top:244.1px;font-size:10px;line-height:15.3px;color:#6a6a6a">4a</div>
<div class="a mono" style="left:273.4px;top:244.1px;font-size:10px;line-height:15.3px;color:#6a6a6a">34</div>
<div class="a mono" style="left:291.9px;top:244.1px;font-size:10px;line-height:15.3px;color:#6a6a6a">40</div>
<div class="a mono" style="left:310.3px;top:244.1px;font-size:10px;line-height:15.3px;color:#6a6a6a">fe</div>
<div class="a mono" style="left:328.7px;top:244.1px;font-size:10px;line-height:15.3px;color:#6a6a6a">ee</div>
<div class="a mono" style="left:347.1px;top:244.1px;font-size:10px;line-height:15.3px;color:#6a6a6a">eb</div>
<div class="a mono" style="left:367.5px;top:244.1px;font-size:10px;line-height:15.3px;color:#666;white-space:pre">.sÌ´eôý¼.¨J4@þîë</div>
<div class="a mono" style="left:7px;top:261.6px;font-size:10px;line-height:15.3px;color:#d85050">000000e0</div>
<div class="a mono" style="left:64.2px;top:261.6px;font-size:10px;line-height:15.3px;color:#6a6a6a">a8</div>
<div class="a mono" style="left:82.6px;top:261.6px;font-size:10px;line-height:15.3px;color:#6a6a6a">12</div>
<div class="a mono" style="left:101.1px;top:261.6px;font-size:10px;line-height:15.3px;color:#6a6a6a">d4</div>
<div class="a mono" style="left:119.5px;top:261.6px;font-size:10px;line-height:15.3px;color:#6a6a6a">fa</div>
<div class="a mono" style="left:137.9px;top:261.6px;font-size:10px;line-height:15.3px;color:#6a6a6a">a4</div>
<div class="a mono" style="left:156.3px;top:261.6px;font-size:10px;line-height:15.3px;color:#6a6a6a">b4</div>
<div class="a mono" style="left:174.8px;top:261.6px;font-size:10px;line-height:15.3px;color:#6a6a6a">d9</div>
<div class="a mono" style="left:193.2px;top:261.6px;font-size:10px;line-height:15.3px;color:#6a6a6a">5a</div>
<div class="a mono" style="left:218.1px;top:261.6px;font-size:10px;line-height:15.3px;color:#6a6a6a">57</div>
<div class="a mono" style="left:236.6px;top:261.6px;font-size:10px;line-height:15.3px;color:#6a6a6a">c3</div>
<div class="a mono" style="left:255.0px;top:261.6px;font-size:10px;line-height:15.3px;color:#6a6a6a">9d</div>
<div class="a mono" style="left:273.4px;top:261.6px;font-size:10px;line-height:15.3px;color:#6a6a6a">66</div>
<div class="a mono" style="left:291.9px;top:261.6px;font-size:10px;line-height:15.3px;color:#6a6a6a">78</div>
<div class="a mono" style="left:310.3px;top:261.6px;font-size:10px;line-height:15.3px;color:#6a6a6a">1d</div>
<div class="a mono" style="left:328.7px;top:261.6px;font-size:10px;line-height:15.3px;color:#6a6a6a">fb</div>
<div class="a mono" style="left:347.1px;top:261.6px;font-size:10px;line-height:15.3px;color:#6a6a6a">eb</div>
<div class="a mono" style="left:367.5px;top:261.6px;font-size:10px;line-height:15.3px;color:#666;white-space:pre">¨.Ôú¤´ÙZWÃ.fx.ûë</div>
<div class="a mono" style="left:7px;top:279.1px;font-size:10px;line-height:15.3px;color:#d85050">000000f0</div>
<div class="a mono" style="left:64.2px;top:279.1px;font-size:10px;line-height:15.3px;color:#6a6a6a">fd</div>
<div class="a mono" style="left:82.6px;top:279.1px;font-size:10px;line-height:15.3px;color:#6a6a6a">c6</div>
<div class="a mono" style="left:101.1px;top:279.1px;font-size:10px;line-height:15.3px;color:#6a6a6a">e6</div>
<div class="a mono" style="left:119.5px;top:279.1px;font-size:10px;line-height:15.3px;color:#6a6a6a">9c</div>
<div class="a mono" style="left:137.9px;top:279.1px;font-size:10px;line-height:15.3px;color:#6a6a6a">ca</div>
<div class="a mono" style="left:156.3px;top:279.1px;font-size:10px;line-height:15.3px;color:#6a6a6a">ff</div>
<div class="a mono" style="left:174.8px;top:279.1px;font-size:10px;line-height:15.3px;color:#6a6a6a">4b</div>
<div class="a mono" style="left:193.2px;top:279.1px;font-size:10px;line-height:15.3px;color:#6a6a6a">ac</div>
<div class="a mono" style="left:218.1px;top:279.1px;font-size:10px;line-height:15.3px;color:#6a6a6a">7f</div>
<div class="a mono" style="left:236.6px;top:279.1px;font-size:10px;line-height:15.3px;color:#6a6a6a">0e</div>
<div class="a mono" style="left:255.0px;top:279.1px;font-size:10px;line-height:15.3px;color:#6a6a6a">e1</div>
<div class="a mono" style="left:273.4px;top:279.1px;font-size:10px;line-height:15.3px;color:#6a6a6a">cd</div>
<div class="a mono" style="left:291.9px;top:279.1px;font-size:10px;line-height:15.3px;color:#6a6a6a">fb</div>
<div class="a mono" style="left:310.3px;top:279.1px;font-size:10px;line-height:15.3px;color:#6a6a6a">c9</div>
<div class="a mono" style="left:328.7px;top:279.1px;font-size:10px;line-height:15.3px;color:#6a6a6a">f3</div>
<div class="a mono" style="left:347.1px;top:279.1px;font-size:10px;line-height:15.3px;color:#6a6a6a">54</div>
<div class="a mono" style="left:367.5px;top:279.1px;font-size:10px;line-height:15.3px;color:#666;white-space:pre">ýÆæ.ÊÿK¬..áÍûÉóT</div>
<div class="a mono" style="left:7px;top:296.6px;font-size:10px;line-height:15.3px;color:#d85050">00000100</div>
<div class="a mono" style="left:64.2px;top:296.6px;font-size:10px;line-height:15.3px;color:#6a6a6a">59</div>
<div class="a mono" style="left:82.6px;top:296.6px;font-size:10px;line-height:15.3px;color:#6a6a6a">3e</div>
<div class="a mono" style="left:101.1px;top:296.6px;font-size:10px;line-height:15.3px;color:#6a6a6a">9f</div>
<div class="a mono" style="left:119.5px;top:296.6px;font-size:10px;line-height:15.3px;color:#6a6a6a">55</div>
<div class="a mono" style="left:137.9px;top:296.6px;font-size:10px;line-height:15.3px;color:#6a6a6a">e1</div>
<div class="a mono" style="left:156.3px;top:296.6px;font-size:10px;line-height:15.3px;color:#6a6a6a">0b</div>
<div class="a mono" style="left:174.8px;top:296.6px;font-size:10px;line-height:15.3px;color:#6a6a6a">db</div>
<div class="a mono" style="left:193.2px;top:296.6px;font-size:10px;line-height:15.3px;color:#6a6a6a">f4</div>
<div class="a mono" style="left:218.1px;top:296.6px;font-size:10px;line-height:15.3px;color:#6a6a6a">56</div>
<div class="a mono" style="left:236.6px;top:296.6px;font-size:10px;line-height:15.3px;color:#6a6a6a">7c</div>
<div class="a mono" style="left:255.0px;top:296.6px;font-size:10px;line-height:15.3px;color:#6a6a6a">ea</div>
<div class="a mono" style="left:273.4px;top:296.6px;font-size:10px;line-height:15.3px;color:#6a6a6a">ba</div>
<div class="a mono" style="left:291.9px;top:296.6px;font-size:10px;line-height:15.3px;color:#6a6a6a">24</div>
<div class="a mono" style="left:310.3px;top:296.6px;font-size:10px;line-height:15.3px;color:#6a6a6a">14</div>
<div class="a mono" style="left:328.7px;top:296.6px;font-size:10px;line-height:15.3px;color:#6a6a6a">29</div>
<div class="a mono" style="left:347.1px;top:296.6px;font-size:10px;line-height:15.3px;color:#6a6a6a">06</div>
<div class="a mono" style="left:367.5px;top:296.6px;font-size:10px;line-height:15.3px;color:#666;white-space:pre">Y&gt;.Uá.ÛôV|êº$.).</div>
<div class="a mono" style="left:7px;top:314.1px;font-size:10px;line-height:15.3px;color:#d85050">00000110</div>
<div class="a mono" style="left:64.2px;top:314.1px;font-size:10px;line-height:15.3px;color:#6a6a6a">d1</div>
<div class="a mono" style="left:82.6px;top:314.1px;font-size:10px;line-height:15.3px;color:#6a6a6a">01</div>
<div class="a mono" style="left:101.1px;top:314.1px;font-size:10px;line-height:15.3px;color:#6a6a6a">d3</div>
<div class="a mono" style="left:119.5px;top:314.1px;font-size:10px;line-height:15.3px;color:#6a6a6a">af</div>
<div class="a mono" style="left:137.9px;top:314.1px;font-size:10px;line-height:15.3px;color:#6a6a6a">af</div>
<div class="a mono" style="left:156.3px;top:314.1px;font-size:10px;line-height:15.3px;color:#6a6a6a">2e</div>
<div class="a mono" style="left:174.8px;top:314.1px;font-size:10px;line-height:15.3px;color:#6a6a6a">20</div>
<div class="a mono" style="left:193.2px;top:314.1px;font-size:10px;line-height:15.3px;color:#6a6a6a">5e</div>
<div class="a mono" style="left:218.1px;top:314.1px;font-size:10px;line-height:15.3px;color:#6a6a6a">56</div>
<div class="a mono" style="left:236.6px;top:314.1px;font-size:10px;line-height:15.3px;color:#6a6a6a">b2</div>
<div class="a mono" style="left:255.0px;top:314.1px;font-size:10px;line-height:15.3px;color:#6a6a6a">9d</div>
<div class="a mono" style="left:273.4px;top:314.1px;font-size:10px;line-height:15.3px;color:#6a6a6a">f5</div>
<div class="a mono" style="left:291.9px;top:314.1px;font-size:10px;line-height:15.3px;color:#6a6a6a">06</div>
<div class="a mono" style="left:310.3px;top:314.1px;font-size:10px;line-height:15.3px;color:#6a6a6a">b5</div>
<div class="a mono" style="left:328.7px;top:314.1px;font-size:10px;line-height:15.3px;color:#6a6a6a">83</div>
<div class="a mono" style="left:347.1px;top:314.1px;font-size:10px;line-height:15.3px;color:#6a6a6a">7e</div>
<div class="a mono" style="left:367.5px;top:314.1px;font-size:10px;line-height:15.3px;color:#666;white-space:pre">Ñ.Ó¯¯. ^V².õ.µ.~</div>
<div class="a mono" style="left:7px;top:331.6px;font-size:10px;line-height:15.3px;color:#d85050">00000120</div>
<div class="a mono" style="left:64.2px;top:331.6px;font-size:10px;line-height:15.3px;color:#6a6a6a">7e</div>
<div class="a mono" style="left:82.6px;top:331.6px;font-size:10px;line-height:15.3px;color:#6a6a6a">75</div>
<div class="a mono" style="left:101.1px;top:331.6px;font-size:10px;line-height:15.3px;color:#6a6a6a">13</div>
<div class="a mono" style="left:119.5px;top:331.6px;font-size:10px;line-height:15.3px;color:#6a6a6a">a9</div>
<div class="a mono" style="left:137.9px;top:331.6px;font-size:10px;line-height:15.3px;color:#6a6a6a">cf</div>
<div class="a mono" style="left:156.3px;top:331.6px;font-size:10px;line-height:15.3px;color:#6a6a6a">20</div>
<div class="a mono" style="left:174.8px;top:331.6px;font-size:10px;line-height:15.3px;color:#6a6a6a">0e</div>
<div class="a mono" style="left:193.2px;top:331.6px;font-size:10px;line-height:15.3px;color:#6a6a6a">88</div>
<div class="a mono" style="left:218.1px;top:331.6px;font-size:10px;line-height:15.3px;color:#6a6a6a">cc</div>
<div class="a mono" style="left:236.6px;top:331.6px;font-size:10px;line-height:15.3px;color:#6a6a6a">b4</div>
<div class="a mono" style="left:255.0px;top:331.6px;font-size:10px;line-height:15.3px;color:#6a6a6a">c1</div>
<div class="a mono" style="left:273.4px;top:331.6px;font-size:10px;line-height:15.3px;color:#6a6a6a">a9</div>
<div class="a mono" style="left:291.9px;top:331.6px;font-size:10px;line-height:15.3px;color:#6a6a6a">0b</div>
<div class="a mono" style="left:310.3px;top:331.6px;font-size:10px;line-height:15.3px;color:#6a6a6a">02</div>
<div class="a mono" style="left:328.7px;top:331.6px;font-size:10px;line-height:15.3px;color:#6a6a6a">fa</div>
<div class="a mono" style="left:347.1px;top:331.6px;font-size:10px;line-height:15.3px;color:#6a6a6a">95</div>
<div class="a mono" style="left:367.5px;top:331.6px;font-size:10px;line-height:15.3px;color:#666;white-space:pre">~u.©Ï ..Ì´Á©..ú.</div>
<div class="a mono" style="left:7px;top:349.1px;font-size:10px;line-height:15.3px;color:#d85050">00000130</div>
<div class="a mono" style="left:64.2px;top:349.1px;font-size:10px;line-height:15.3px;color:#6a6a6a">80</div>
<div class="a mono" style="left:82.6px;top:349.1px;font-size:10px;line-height:15.3px;color:#6a6a6a">9a</div>
<div class="a mono" style="left:101.1px;top:349.1px;font-size:10px;line-height:15.3px;color:#6a6a6a">e5</div>
<div class="a mono" style="left:119.5px;top:349.1px;font-size:10px;line-height:15.3px;color:#6a6a6a">44</div>
<div class="a mono" style="left:137.9px;top:349.1px;font-size:10px;line-height:15.3px;color:#6a6a6a">22</div>
<div class="a mono" style="left:156.3px;top:349.1px;font-size:10px;line-height:15.3px;color:#6a6a6a">f9</div>
<div class="a mono" style="left:174.8px;top:349.1px;font-size:10px;line-height:15.3px;color:#6a6a6a">04</div>
<div class="a mono" style="left:193.2px;top:349.1px;font-size:10px;line-height:15.3px;color:#6a6a6a">d9</div>
<div class="a mono" style="left:218.1px;top:349.1px;font-size:10px;line-height:15.3px;color:#6a6a6a">83</div>
<div class="a mono" style="left:236.6px;top:349.1px;font-size:10px;line-height:15.3px;color:#6a6a6a">19</div>
<div class="a mono" style="left:255.0px;top:349.1px;font-size:10px;line-height:15.3px;color:#6a6a6a">8b</div>
<div class="a mono" style="left:273.4px;top:349.1px;font-size:10px;line-height:15.3px;color:#6a6a6a">31</div>
<div class="a mono" style="left:291.9px;top:349.1px;font-size:10px;line-height:15.3px;color:#6a6a6a">17</div>
<div class="a mono" style="left:310.3px;top:349.1px;font-size:10px;line-height:15.3px;color:#6a6a6a">86</div>
<div class="a mono" style="left:328.7px;top:349.1px;font-size:10px;line-height:15.3px;color:#6a6a6a">50</div>
<div class="a mono" style="left:347.1px;top:349.1px;font-size:10px;line-height:15.3px;color:#6a6a6a">02</div>
<div class="a mono" style="left:367.5px;top:349.1px;font-size:10px;line-height:15.3px;color:#666;white-space:pre">..åD"ù.Ù...1..P.</div>
<div class="a mono" style="left:7px;top:366.6px;font-size:10px;line-height:15.3px;color:#d85050">00000140</div>
<div class="a mono" style="left:64.2px;top:366.6px;font-size:10px;line-height:15.3px;color:#6a6a6a">95</div>
<div class="a mono" style="left:82.6px;top:366.6px;font-size:10px;line-height:15.3px;color:#6a6a6a">b6</div>
<div class="a mono" style="left:101.1px;top:366.6px;font-size:10px;line-height:15.3px;color:#6a6a6a">2b</div>
<div class="a mono" style="left:119.5px;top:366.6px;font-size:10px;line-height:15.3px;color:#6a6a6a">74</div>
<div class="a mono" style="left:137.9px;top:366.6px;font-size:10px;line-height:15.3px;color:#6a6a6a">7c</div>
<div class="a mono" style="left:156.3px;top:366.6px;font-size:10px;line-height:15.3px;color:#6a6a6a">6c</div>
<div class="a mono" style="left:174.8px;top:366.6px;font-size:10px;line-height:15.3px;color:#6a6a6a">ff</div>
<div class="a mono" style="left:193.2px;top:366.6px;font-size:10px;line-height:15.3px;color:#6a6a6a">7a</div>
<div class="a mono" style="left:218.1px;top:366.6px;font-size:10px;line-height:15.3px;color:#6a6a6a">71</div>
<div class="a mono" style="left:236.6px;top:366.6px;font-size:10px;line-height:15.3px;color:#6a6a6a">0f</div>
<div class="a mono" style="left:255.0px;top:366.6px;font-size:10px;line-height:15.3px;color:#6a6a6a">2d</div>
<div class="a mono" style="left:273.4px;top:366.6px;font-size:10px;line-height:15.3px;color:#6a6a6a">19</div>
<div class="a mono" style="left:291.9px;top:366.6px;font-size:10px;line-height:15.3px;color:#6a6a6a">77</div>
<div class="a mono" style="left:310.3px;top:366.6px;font-size:10px;line-height:15.3px;color:#6a6a6a">cd</div>
<div class="a mono" style="left:328.7px;top:366.6px;font-size:10px;line-height:15.3px;color:#6a6a6a">46</div>
<div class="a mono" style="left:347.1px;top:366.6px;font-size:10px;line-height:15.3px;color:#6a6a6a">24</div>
<div class="a mono" style="left:367.5px;top:366.6px;font-size:10px;line-height:15.3px;color:#666;white-space:pre">.¶+t|lÿzq.-.wÍF$</div>
<div class="a mono" style="left:7px;top:384.1px;font-size:10px;line-height:15.3px;color:#d85050">00000150</div>
<div class="a mono" style="left:64.2px;top:384.1px;font-size:10px;line-height:15.3px;color:#6a6a6a">d5</div>
<div class="a mono" style="left:82.6px;top:384.1px;font-size:10px;line-height:15.3px;color:#6a6a6a">06</div>
<div class="a mono" style="left:101.1px;top:384.1px;font-size:10px;line-height:15.3px;color:#6a6a6a">ce</div>
<div class="a mono" style="left:119.5px;top:384.1px;font-size:10px;line-height:15.3px;color:#6a6a6a">c0</div>
<div class="a mono" style="left:137.9px;top:384.1px;font-size:10px;line-height:15.3px;color:#6a6a6a">ee</div>
<div class="a mono" style="left:156.3px;top:384.1px;font-size:10px;line-height:15.3px;color:#6a6a6a">22</div>
<div class="a mono" style="left:174.8px;top:384.1px;font-size:10px;line-height:15.3px;color:#6a6a6a">b7</div>
<div class="a mono" style="left:193.2px;top:384.1px;font-size:10px;line-height:15.3px;color:#6a6a6a">ad</div>
<div class="a mono" style="left:218.1px;top:384.1px;font-size:10px;line-height:15.3px;color:#6a6a6a">90</div>
<div class="a mono" style="left:236.6px;top:384.1px;font-size:10px;line-height:15.3px;color:#6a6a6a">41</div>
<div class="a mono" style="left:255.0px;top:384.1px;font-size:10px;line-height:15.3px;color:#6a6a6a">77</div>
<div class="a mono" style="left:273.4px;top:384.1px;font-size:10px;line-height:15.3px;color:#6a6a6a">7b</div>
<div class="a mono" style="left:291.9px;top:384.1px;font-size:10px;line-height:15.3px;color:#6a6a6a">3d</div>
<div class="a mono" style="left:310.3px;top:384.1px;font-size:10px;line-height:15.3px;color:#6a6a6a">59</div>
<div class="a mono" style="left:328.7px;top:384.1px;font-size:10px;line-height:15.3px;color:#6a6a6a">b3</div>
<div class="a mono" style="left:347.1px;top:384.1px;font-size:10px;line-height:15.3px;color:#6a6a6a">75</div>
<div class="a mono" style="left:367.5px;top:384.1px;font-size:10px;line-height:15.3px;color:#666;white-space:pre">Õ.ÎÀî"·..Aw{=Y³u</div>
<div class="a mono" style="left:7px;top:401.6px;font-size:10px;line-height:15.3px;color:#d85050">00000160</div>
<div class="a mono" style="left:64.2px;top:401.6px;font-size:10px;line-height:15.3px;color:#6a6a6a">ff</div>
<div class="a mono" style="left:82.6px;top:401.6px;font-size:10px;line-height:15.3px;color:#6a6a6a">57</div>
<div class="a mono" style="left:101.1px;top:401.6px;font-size:10px;line-height:15.3px;color:#6a6a6a">89</div>
<div class="a mono" style="left:119.5px;top:401.6px;font-size:10px;line-height:15.3px;color:#6a6a6a">d8</div>
<div class="a mono" style="left:137.9px;top:401.6px;font-size:10px;line-height:15.3px;color:#6a6a6a">e7</div>
<div class="a mono" style="left:156.3px;top:401.6px;font-size:10px;line-height:15.3px;color:#6a6a6a">62</div>
<div class="a mono" style="left:174.8px;top:401.6px;font-size:10px;line-height:15.3px;color:#6a6a6a">86</div>
<div class="a mono" style="left:193.2px;top:401.6px;font-size:10px;line-height:15.3px;color:#6a6a6a">28</div>
<div class="a mono" style="left:218.1px;top:401.6px;font-size:10px;line-height:15.3px;color:#6a6a6a">2c</div>
<div class="a mono" style="left:236.6px;top:401.6px;font-size:10px;line-height:15.3px;color:#6a6a6a">8e</div>
<div class="a mono" style="left:255.0px;top:401.6px;font-size:10px;line-height:15.3px;color:#6a6a6a">34</div>
<div class="a mono" style="left:273.4px;top:401.6px;font-size:10px;line-height:15.3px;color:#6a6a6a">a7</div>
<div class="a mono" style="left:291.9px;top:401.6px;font-size:10px;line-height:15.3px;color:#6a6a6a">ac</div>
<div class="a mono" style="left:310.3px;top:401.6px;font-size:10px;line-height:15.3px;color:#6a6a6a">84</div>
<div class="a mono" style="left:328.7px;top:401.6px;font-size:10px;line-height:15.3px;color:#6a6a6a">5b</div>
<div class="a mono" style="left:347.1px;top:401.6px;font-size:10px;line-height:15.3px;color:#6a6a6a">6f</div>
<div class="a mono" style="left:367.5px;top:401.6px;font-size:10px;line-height:15.3px;color:#666;white-space:pre">ÿW.Øçb.(,.4§¬.[o</div>
<div class="a mono" style="left:7px;top:419.1px;font-size:10px;line-height:15.3px;color:#d85050">00000170</div>
<div class="a mono" style="left:64.2px;top:419.1px;font-size:10px;line-height:15.3px;color:#6a6a6a">40</div>
<div class="a mono" style="left:82.6px;top:419.1px;font-size:10px;line-height:15.3px;color:#6a6a6a">87</div>
<div class="a mono" style="left:101.1px;top:419.1px;font-size:10px;line-height:15.3px;color:#6a6a6a">60</div>
<div class="a mono" style="left:119.5px;top:419.1px;font-size:10px;line-height:15.3px;color:#6a6a6a">bd</div>
<div class="a mono" style="left:137.9px;top:419.1px;font-size:10px;line-height:15.3px;color:#6a6a6a">d7</div>
<div class="a mono" style="left:156.3px;top:419.1px;font-size:10px;line-height:15.3px;color:#6a6a6a">05</div>
<div class="a mono" style="left:174.8px;top:419.1px;font-size:10px;line-height:15.3px;color:#6a6a6a">1c</div>
<div class="a mono" style="left:193.2px;top:419.1px;font-size:10px;line-height:15.3px;color:#6a6a6a">1b</div>
<div class="a mono" style="left:218.1px;top:419.1px;font-size:10px;line-height:15.3px;color:#6a6a6a">d7</div>
<div class="a mono" style="left:236.6px;top:419.1px;font-size:10px;line-height:15.3px;color:#6a6a6a">a7</div>
<div class="a mono" style="left:255.0px;top:419.1px;font-size:10px;line-height:15.3px;color:#6a6a6a">7d</div>
<div class="a mono" style="left:273.4px;top:419.1px;font-size:10px;line-height:15.3px;color:#6a6a6a">42</div>
<div class="a mono" style="left:291.9px;top:419.1px;font-size:10px;line-height:15.3px;color:#6a6a6a">e9</div>
<div class="a mono" style="left:310.3px;top:419.1px;font-size:10px;line-height:15.3px;color:#6a6a6a">9e</div>
<div class="a mono" style="left:328.7px;top:419.1px;font-size:10px;line-height:15.3px;color:#6a6a6a">c2</div>
<div class="a mono" style="left:347.1px;top:419.1px;font-size:10px;line-height:15.3px;color:#6a6a6a">ca</div>
<div class="a mono" style="left:367.5px;top:419.1px;font-size:10px;line-height:15.3px;color:#666;white-space:pre">@.`½×...×§}Bé.ÂÊ</div>
<div class="a mono" style="left:7px;top:436.6px;font-size:10px;line-height:15.3px;color:#d85050">00000180</div>
<div class="a mono" style="left:64.2px;top:436.6px;font-size:10px;line-height:15.3px;color:#6a6a6a">0a</div>
<div class="a mono" style="left:82.6px;top:436.6px;font-size:10px;line-height:15.3px;color:#6a6a6a">36</div>
<div class="a mono" style="left:101.1px;top:436.6px;font-size:10px;line-height:15.3px;color:#6a6a6a">2a</div>
<div class="a mono" style="left:119.5px;top:436.6px;font-size:10px;line-height:15.3px;color:#6a6a6a">2f</div>
<div class="a mono" style="left:137.9px;top:436.6px;font-size:10px;line-height:15.3px;color:#6a6a6a">63</div>
<div class="a mono" style="left:156.3px;top:436.6px;font-size:10px;line-height:15.3px;color:#6a6a6a">f2</div>
<div class="a mono" style="left:174.8px;top:436.6px;font-size:10px;line-height:15.3px;color:#6a6a6a">3e</div>
<div class="a mono" style="left:193.2px;top:436.6px;font-size:10px;line-height:15.3px;color:#6a6a6a">a7</div>
<div class="a mono" style="left:218.1px;top:436.6px;font-size:10px;line-height:15.3px;color:#6a6a6a">b7</div>
<div class="a mono" style="left:236.6px;top:436.6px;font-size:10px;line-height:15.3px;color:#6a6a6a">de</div>
<div class="a mono" style="left:255.0px;top:436.6px;font-size:10px;line-height:15.3px;color:#6a6a6a">b4</div>
<div class="a mono" style="left:273.4px;top:436.6px;font-size:10px;line-height:15.3px;color:#6a6a6a">f8</div>
<div class="a mono" style="left:291.9px;top:436.6px;font-size:10px;line-height:15.3px;color:#6a6a6a">c3</div>
<div class="a mono" style="left:310.3px;top:436.6px;font-size:10px;line-height:15.3px;color:#6a6a6a">b0</div>
<div class="a mono" style="left:328.7px;top:436.6px;font-size:10px;line-height:15.3px;color:#6a6a6a">dc</div>
<div class="a mono" style="left:347.1px;top:436.6px;font-size:10px;line-height:15.3px;color:#6a6a6a">79</div>
<div class="a mono" style="left:367.5px;top:436.6px;font-size:10px;line-height:15.3px;color:#666;white-space:pre">.6*/cò&gt;§·Þ´øÃ°Üy</div>
<div class="a mono" style="left:7px;top:454.1px;font-size:10px;line-height:15.3px;color:#d85050">00000190</div>
<div class="a mono" style="left:64.2px;top:454.1px;font-size:10px;line-height:15.3px;color:#6a6a6a">11</div>
<div class="a mono" style="left:82.6px;top:454.1px;font-size:10px;line-height:15.3px;color:#6a6a6a">2d</div>
<div class="a mono" style="left:101.1px;top:454.1px;font-size:10px;line-height:15.3px;color:#6a6a6a">99</div>
<div class="a mono" style="left:119.5px;top:454.1px;font-size:10px;line-height:15.3px;color:#6a6a6a">ec</div>
<div class="a mono" style="left:137.9px;top:454.1px;font-size:10px;line-height:15.3px;color:#6a6a6a">4a</div>
<div class="a mono" style="left:156.3px;top:454.1px;font-size:10px;line-height:15.3px;color:#6a6a6a">d4</div>
<div class="a mono" style="left:174.8px;top:454.1px;font-size:10px;line-height:15.3px;color:#6a6a6a">4e</div>
<div class="a mono" style="left:193.2px;top:454.1px;font-size:10px;line-height:15.3px;color:#6a6a6a">27</div>
<div class="a mono" style="left:218.1px;top:454.1px;font-size:10px;line-height:15.3px;color:#6a6a6a">ba</div>
<div class="a mono" style="left:236.6px;top:454.1px;font-size:10px;line-height:15.3px;color:#6a6a6a">98</div>
<div class="a mono" style="left:255.0px;top:454.1px;font-size:10px;line-height:15.3px;color:#6a6a6a">8f</div>
<div class="a mono" style="left:273.4px;top:454.1px;font-size:10px;line-height:15.3px;color:#6a6a6a">b9</div>
<div class="a mono" style="left:291.9px;top:454.1px;font-size:10px;line-height:15.3px;color:#6a6a6a">70</div>
<div class="a mono" style="left:310.3px;top:454.1px;font-size:10px;line-height:15.3px;color:#6a6a6a">0b</div>
<div class="a mono" style="left:328.7px;top:454.1px;font-size:10px;line-height:15.3px;color:#6a6a6a">1f</div>
<div class="a mono" style="left:347.1px;top:454.1px;font-size:10px;line-height:15.3px;color:#6a6a6a">f5</div>
<div class="a mono" style="left:367.5px;top:454.1px;font-size:10px;line-height:15.3px;color:#666;white-space:pre">.-.ìJÔN'º..¹p..õ</div>
<div class="a" style="left:675px;top:0;width:13px;height:470px;background:#fcfcfc"></div>
<div class="a" style="left:677.5px;top:6px;width:0;height:0;border-left:3.7px solid transparent;border-right:3.7px solid transparent;border-bottom:4.3px solid #8a8a8a"></div>
<div class="a" style="left:677.5px;top:16px;width:7.5px;height:22.5px;border-radius:3.7px;background:#909090"></div>
<div class="a" style="left:677.5px;top:458.5px;width:0;height:0;border-left:3.7px solid transparent;border-right:3.7px solid transparent;border-top:4.3px solid #8a8a8a"></div>
</div>
<div class="tab act" style="left:900px;top:608px;width:72px;padding-left:8px">info panel</div>
<div class="maxi" style="left:1165px;top:611px"></div>
<div class="a" style="left:900px;top:623px;width:278px;height:244px;background:#222;color:#e8e8e8;font-size:12px">
<div class="a" style="left:8.3px;top:14px;font-size:13px;line-height:16px;letter-spacing:-0.5px">no selection</div>
<div class="a" style="left:82px;top:9px;width:39px;height:24.5px;border-radius:3px;background:#444"></div>
<div class="a" style="left:82px;top:9px;width:39px;height:24.5px;font-size:12px;line-height:26px;text-align:center">-</div>
<div class="a" style="left:8.3px;top:38px;font-size:11px;line-height:14px;letter-spacing:-0.3px">Selection length: 1</div>
<div class="a" style="left:8.7px;top:59.3px;width:10px;height:10px;background:#fff;border-radius:1.5px"></div>
<div class="a" style="left:23.2px;top:57px;font-size:11px;line-height:14px;letter-spacing:-0.3px">disable lazy parsing</div>
<div class="a" style="left:8.5px;top:75.5px;font-size:11px;line-height:14px;letter-spacing:-0.3px;white-space:pre">Unparsed parts: <span style="color:#14c890;border-bottom:1px solid #119c73">&lt;&lt;</span> - / 0 <span style="color:#14c890;border-bottom:1px solid #119c73">&gt;&gt;</span></div>
<div class="a" style="left:8.5px;top:93px;font-size:11px;line-height:14px;letter-spacing:-0.3px;white-space:pre">Byte arrays: <span style="color:#14c890;border-bottom:1px solid #119c73">&lt;&lt;</span> - / 1 <span style="color:#14c890;border-bottom:1px solid #119c73">&gt;&gt;</span></div>
<div class="a" style="left:8.5px;top:110.5px;font-size:11px;line-height:14px;letter-spacing:-0.3px">Selected:</div>
<div class="a" style="left:8.5px;top:127.5px;font-size:11px;line-height:14px;letter-spacing:-0.3px;white-space:pre"><span style="color:#14c890;border-bottom:1px solid #119c73">export to JSON</span> (<span style="color:#14c890;border-bottom:1px solid #119c73">hex</span>)</div>
<div class="a" style="right:8px;top:144px;font-size:11px;line-height:14px;letter-spacing:-0.3px;white-space:pre"><span style="color:#14c890;border-bottom:1px solid #119c73">about webide</span></div>
</div>
<div class="tab act" style="left:1182px;top:608px;width:71px;padding-left:8.5px">converter</div>
<div class="maxi" style="left:1587px;top:611px"></div>
<div class="a mono" style="left:1182px;top:623px;width:418px;height:244px;background:#222;color:#e8e8e8;font-size:10px;letter-spacing:-0.5px">
<div class="a" style="left:9px;top:10px;line-height:12px;font-weight:bold;white-space:pre">Type</div>
<div class="a" style="left:53.6px;top:10px;line-height:12px;font-weight:bold;white-space:pre">Value (unsigned)</div>
<div class="a" style="left:183.7px;top:10px;line-height:12px;font-weight:bold;white-space:pre">(signed)</div>
<div class="a" style="left:9px;top:23.8px;line-height:12px;white-space:pre">i8</div>
<div class="a" style="left:9px;top:35.5px;line-height:12px;white-space:pre">i16le</div>
<div class="a" style="left:9px;top:47.2px;line-height:12px;white-space:pre">i32le</div>
<div class="a" style="left:9px;top:58.9px;line-height:12px;white-space:pre">i64le</div>
<div class="a" style="left:9px;top:70.6px;line-height:12px;white-space:pre">i16be</div>
<div class="a" style="left:9px;top:82.3px;line-height:12px;white-space:pre">i32be</div>
<div class="a" style="left:9px;top:94.0px;line-height:12px;white-space:pre">i64be</div>
<div class="a" style="left:9px;top:105.7px;line-height:12px;white-space:pre">float</div>
<div class="a" style="left:9px;top:117.5px;line-height:12px;white-space:pre">double</div>
<div class="a" style="left:9px;top:129.2px;line-height:12px;white-space:pre">unixts</div>
<div class="a" style="left:9px;top:141.5px;line-height:12px;white-space:pre">ascii</div>
<div class="a" style="left:9px;top:155.0px;line-height:12px;white-space:pre">utf8</div>
<div class="a" style="left:9px;top:168.3px;line-height:12px;white-space:pre">utf16le</div>
<div class="a" style="left:9px;top:181.9px;line-height:12px;white-space:pre">utf16be</div>
</div>
</body></html>
